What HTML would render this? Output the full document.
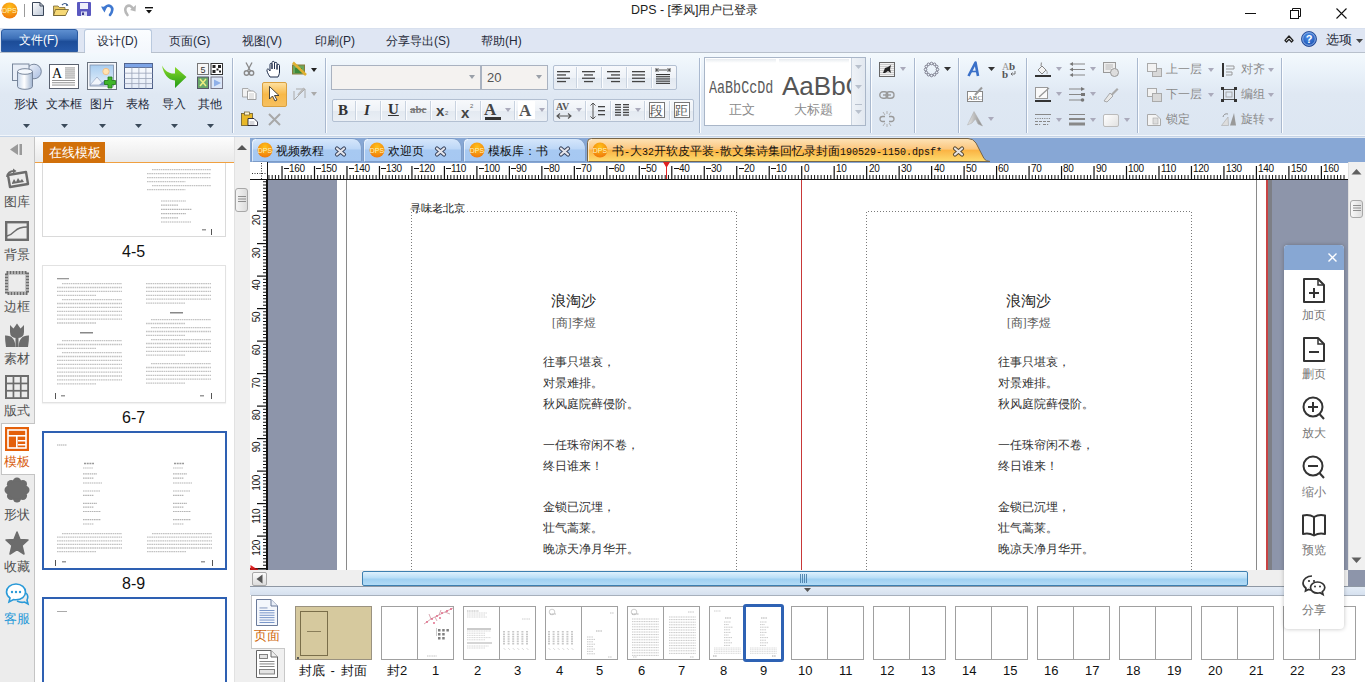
<!DOCTYPE html><html><head><meta charset="utf-8"><style>
*{margin:0;padding:0;box-sizing:border-box}
html,body{width:1365px;height:682px;overflow:hidden;background:#fff;font-family:"Liberation Sans",sans-serif;font-size:12px;color:#222}
.a{position:absolute}
.t{position:absolute;white-space:nowrap;line-height:1}
svg{overflow:visible}
</style></head><body>
<div class="a" style="left:0px;top:0px;width:1365px;height:28px;background:#fff"></div>
<svg class="a" style="left:1px;top:2px;" width="17" height="17" viewBox="0 0 17 17"><defs><radialGradient id="dpsg" cx="50%" cy="30%" r="70%"><stop offset="0" stop-color="#ffc21a"/><stop offset="1" stop-color="#f07a0a"/></radialGradient></defs><circle cx="8.5" cy="8.5" r="8" fill="url(#dpsg)"/><text x="8.5" y="11.3" font-size="7.2" fill="#fff3c0" text-anchor="middle" font-family="Liberation Sans">DPS</text></svg>
<div class="a" style="left:24px;top:4px;width:1px;height:13px;background:#9a9a9a"></div>
<svg class="a" style="left:32px;top:2px;" width="12" height="14" viewBox="0 0 12 14"><defs><linearGradient id="ndg" x1="0" y1="0" x2="1" y2="1"><stop offset="0" stop-color="#fff"/><stop offset="1" stop-color="#b9c4d4"/></linearGradient></defs><path d="M0.5 0.5H8L11.5 4V13.5H0.5Z" fill="url(#ndg)" stroke="#3a4658"/><path d="M8 0.5V4H11.5" fill="none" stroke="#3a4658"/></svg>
<svg class="a" style="left:53px;top:2px;" width="16" height="14" viewBox="0 0 16 14"><path d="M0.5 4H5L6.5 5.5H12V13.5H0.5Z" fill="#e8c860" stroke="#7a6a3a" stroke-width="0.8"/><path d="M2.5 7.5H15.5L12.5 13.5H0.5Z" fill="#f6d874" stroke="#6a5a2a" stroke-width="0.8"/><path d="M9 3 Q12 0 14.5 3" fill="none" stroke="#3a5a8a" stroke-width="1.2"/><path d="M13.5 1.5L15.5 3.5L13 4Z" fill="#3a5a8a"/></svg>
<svg class="a" style="left:77px;top:2px;" width="14" height="14" viewBox="0 0 14 14"><rect x="0" y="0" width="14" height="14" rx="1" fill="#5a58c0"/><rect x="3" y="1" width="8" height="6" fill="#eef0fa"/><rect x="4" y="9.5" width="6" height="4.5" fill="#d8dcf0"/><rect x="5" y="10.5" width="2" height="2.5" fill="#3a3890"/></svg>
<svg class="a" style="left:101px;top:3px;" width="13" height="13" viewBox="0 0 13 13"><path d="M3 6 Q6 1 10 3.5 Q13 6.5 9 12" fill="none" stroke="#3f78d0" stroke-width="2.6" stroke-linecap="round"/><path d="M0 3.5L6 4L3.5 9.5Z" fill="#3f78d0"/></svg>
<svg class="a" style="left:124px;top:3px;" width="12" height="13" viewBox="0 0 12 13"><path d="M9 5.5 Q6 1 2.5 3.5 Q-0.5 7 3.5 12" fill="none" stroke="#b8b8b8" stroke-width="2.6" stroke-linecap="round"/><path d="M12 2L11.5 8.5L6 7Z" fill="#b8b8b8"/></svg>
<svg class="a" style="left:145px;top:7px;" width="8" height="7" viewBox="0 0 8 7"><rect x="0" y="0" width="8" height="1.4" fill="#111"/><path d="M1 3H7L4 6.5Z" fill="#111"/></svg>
<div class="t" style="left:631px;top:4px;font-size:12.4px;color:#1e1e1e;">DPS - [季风]用户已登录</div>
<div class="a" style="left:1245px;top:13px;width:11px;height:1px;background:#111"></div>
<svg class="a" style="left:1290px;top:8px;" width="11" height="11" viewBox="0 0 11 11"><rect x="0.5" y="2.5" width="8" height="8" fill="none" stroke="#111"/><path d="M2.5 2.5V0.5H10.5V8.5H8.5" fill="none" stroke="#111"/></svg>
<svg class="a" style="left:1336px;top:8px;" width="11" height="11" viewBox="0 0 11 11"><path d="M0.5 0.5L10.5 10.5M10.5 0.5L0.5 10.5" stroke="#111" stroke-width="1.1"/></svg>
<div class="a" style="left:0px;top:28px;width:1365px;height:24px;background:#dfe6f3;border-top:1px solid #d8e0ee"></div>
<div class="a" style="left:1px;top:29px;width:77px;height:23px;background:linear-gradient(#5e8fd0 0%,#3d70b8 40%,#1c4c98 55%,#2558a8 100%);border:1px solid #2a5aa0;border-radius:3px 3px 0 0"></div>
<div class="t" style="left:19px;top:34px;font-size:12px;color:#fff;">文件(F)</div>
<div class="a" style="left:84px;top:29px;width:68px;height:24px;background:linear-gradient(#fbfdff,#f3f7fc);border:1px solid #b9c9de;border-bottom:none;border-radius:3px 3px 0 0"></div>
<div class="t" style="left:97px;top:35px;font-size:12px;color:#1f2a3a;">设计(D)</div>
<div class="t" style="left:169px;top:35px;font-size:12px;color:#1f2a3a;">页面(G)</div>
<div class="t" style="left:242px;top:35px;font-size:12px;color:#1f2a3a;">视图(V)</div>
<div class="t" style="left:315px;top:35px;font-size:12px;color:#1f2a3a;">印刷(P)</div>
<div class="t" style="left:386px;top:35px;font-size:12px;color:#1f2a3a;">分享导出(S)</div>
<div class="t" style="left:481px;top:35px;font-size:12px;color:#1f2a3a;">帮助(H)</div>
<svg class="a" style="left:1284px;top:34px;" width="10" height="9" viewBox="0 0 10 9"><path d="M1 6.5L5 2L9 6.5L7.5 8L5 5.3L2.5 8Z" fill="#fff" stroke="#222" stroke-width="1.3" stroke-linejoin="round"/></svg>
<svg class="a" style="left:1301px;top:31px;" width="16" height="16" viewBox="0 0 16 16"><defs><radialGradient id="hg" cx="45%" cy="35%" r="65%"><stop offset="0" stop-color="#4b8ee8"/><stop offset="1" stop-color="#1a4fb0"/></radialGradient></defs><circle cx="8" cy="8" r="7.5" fill="url(#hg)" stroke="#1a3f8a" stroke-width="0.8"/><circle cx="8" cy="8" r="6.3" fill="none" stroke="#cfe0fa" stroke-width="0.6"/><text x="8" y="12.2" font-size="11" font-weight="bold" fill="#fff" text-anchor="middle" font-family="Liberation Sans">?</text></svg>
<div class="t" style="left:1326px;top:34px;font-size:12.5px;color:#1f2a3a;">选项</div>
<svg class="a" style="left:1356px;top:39px;" width="7" height="4" viewBox="0 0 7 4"><path d="M0 0H7L3.5 4Z" fill="#444"/></svg>
<div class="a" style="left:0px;top:52px;width:1365px;height:85px;background:linear-gradient(#f3f9fd 0%,#e9f1f9 25%,#dfe8f3 50%,#dce6f2 100%);border-top:1px solid #b8c0cc;border-bottom:1px solid #c4d3e6"></div>
<div class="a" style="left:0px;top:135px;width:1365px;height:1px;background:#f2f6fb"></div>
<div class="a" style="left:85px;top:50px;width:66px;height:3px;background:#f5f8fd"></div>
<div class="a" style="left:232px;top:58px;width:1px;height:75px;background:#aab9cf"></div>
<div class="a" style="left:233px;top:58px;width:1px;height:75px;background:#fbfdff"></div>
<div class="a" style="left:325px;top:58px;width:1px;height:75px;background:#aab9cf"></div>
<div class="a" style="left:326px;top:58px;width:1px;height:75px;background:#fbfdff"></div>
<div class="a" style="left:699px;top:58px;width:1px;height:75px;background:#aab9cf"></div>
<div class="a" style="left:700px;top:58px;width:1px;height:75px;background:#fbfdff"></div>
<div class="a" style="left:870px;top:58px;width:1px;height:75px;background:#aab9cf"></div>
<div class="a" style="left:871px;top:58px;width:1px;height:75px;background:#fbfdff"></div>
<div class="a" style="left:914px;top:58px;width:1px;height:75px;background:#aab9cf"></div>
<div class="a" style="left:915px;top:58px;width:1px;height:75px;background:#fbfdff"></div>
<div class="a" style="left:958px;top:58px;width:1px;height:75px;background:#aab9cf"></div>
<div class="a" style="left:959px;top:58px;width:1px;height:75px;background:#fbfdff"></div>
<div class="a" style="left:1026px;top:58px;width:1px;height:75px;background:#aab9cf"></div>
<div class="a" style="left:1027px;top:58px;width:1px;height:75px;background:#fbfdff"></div>
<div class="a" style="left:1137px;top:58px;width:1px;height:75px;background:#aab9cf"></div>
<div class="a" style="left:1138px;top:58px;width:1px;height:75px;background:#fbfdff"></div>
<div class="a" style="left:1281px;top:58px;width:1px;height:75px;background:#aab9cf"></div>
<div class="a" style="left:1282px;top:58px;width:1px;height:75px;background:#fbfdff"></div>
<svg class="a" style="left:12px;top:62px;" width="30" height="28" viewBox="0 0 30 28"><defs><linearGradient id="cyl" x1="0" x2="1"><stop offset="0" stop-color="#c6d6ea"/><stop offset="0.45" stop-color="#ffffff"/><stop offset="1" stop-color="#9fb3cf"/></linearGradient><linearGradient id="cir" x1="0" y1="0" x2="1" y2="1"><stop offset="0" stop-color="#f2f6fc"/><stop offset="1" stop-color="#a9bde0"/></linearGradient></defs><circle cx="22" cy="9.5" r="7.3" fill="url(#cir)" stroke="#6d7c92" stroke-width="0.9"/><rect x="0.5" y="2" width="16.5" height="16.5" fill="#e8eef7" stroke="#6d7c92" stroke-width="0.9"/><path d="M5.5 9.5V24.5A7.5 2.8 0 0 0 20.5 24.5V9.5" fill="url(#cyl)" stroke="#6d7c92" stroke-width="0.9"/><ellipse cx="13" cy="9.5" rx="7.5" ry="2.8" fill="#f4f8fd" stroke="#6d7c92" stroke-width="0.9"/></svg>
<svg class="a" style="left:49px;top:64px;" width="30" height="25" viewBox="0 0 30 25"><rect x="0.5" y="0.5" width="29" height="24" fill="#fff" stroke="#5a6270"/><text x="3" y="14" font-size="14" font-family="Liberation Serif" fill="#111">A</text><rect x="16" y="3.5" width="10" height="0.9" fill="#888"/><rect x="16" y="5.5" width="10" height="0.9" fill="#888"/><rect x="16" y="7.5" width="10" height="0.9" fill="#888"/><rect x="16" y="9.5" width="10" height="0.9" fill="#888"/><rect x="16" y="11.5" width="10" height="0.9" fill="#888"/><rect x="16" y="13.5" width="10" height="0.9" fill="#888"/><rect x="3" y="16.0" width="23" height="0.9" fill="#888"/><rect x="3" y="18.3" width="23" height="0.9" fill="#888"/><rect x="3" y="20.6" width="23" height="0.9" fill="#888"/></svg>
<svg class="a" style="left:87px;top:62px;" width="30" height="28" viewBox="0 0 30 28"><defs><linearGradient id="sky" x1="0" y1="0" x2="0" y2="1"><stop offset="0" stop-color="#a8cdf0"/><stop offset="1" stop-color="#e6f0fa"/></linearGradient></defs><rect x="0.5" y="0.5" width="29" height="27" fill="#f4f7fb" stroke="#6b7480"/><rect x="3" y="3" width="23.5" height="21" fill="url(#sky)" stroke="#7f8fa8" stroke-width="0.8"/><circle cx="19" cy="9.5" r="3.2" fill="#ffe3b0" stroke="#f0b880" stroke-width="0.8"/><path d="M3 23L10 15L17 23Z" fill="#f0f4fa" stroke="#8898b8" stroke-width="0.6"/><path d="M12 23L18 18L24 23Z" fill="#7f95c8"/><path d="M21 15h4v3.5h3.5v4h-3.5v3.5h-4v-3.5h-3.5v-4h3.5Z" fill="#3fb52a" stroke="#1e7a14" stroke-width="0.8"/></svg>
<svg class="a" style="left:124px;top:63px;" width="29" height="26" viewBox="0 0 29 26"><defs><linearGradient id="tb" x1="0" y1="0" x2="0" y2="1"><stop offset="0" stop-color="#fbfdff"/><stop offset="1" stop-color="#e4ebf7"/></linearGradient></defs><rect x="0.5" y="0.5" width="28" height="25" fill="url(#tb)" stroke="#4f6088"/><rect x="0.5" y="0.5" width="28" height="4" fill="#7da4e6" stroke="#4f6088" stroke-width="0.8"/><rect x="7.5" y="4.5" width="0.8" height="21" fill="#9aa4b8"/><rect x="14.5" y="4.5" width="0.8" height="21" fill="#9aa4b8"/><rect x="21.5" y="4.5" width="0.8" height="21" fill="#9aa4b8"/><rect x="0.5" y="9.75" width="28" height="0.8" fill="#9aa4b8"/><rect x="0.5" y="15.0" width="28" height="0.8" fill="#9aa4b8"/><rect x="0.5" y="20.25" width="28" height="0.8" fill="#9aa4b8"/></svg>
<svg class="a" style="left:162px;top:65px;" width="25" height="23" viewBox="0 0 25 23"><defs><linearGradient id="ar" x1="0" y1="0" x2="0" y2="1"><stop offset="0" stop-color="#8fdc2a"/><stop offset="1" stop-color="#1f9a16"/></linearGradient></defs><path d="M0 0.5C3 6 7 9 13 8.5V2L24.5 12L13 23V15.5C6 15 1.5 9 0 0.5Z" fill="url(#ar)"/></svg>
<svg class="a" style="left:197px;top:63px;" width="26" height="26" viewBox="0 0 26 26"><rect x="0.5" y="0.5" width="11" height="11" fill="#f6f6f6" stroke="#777"/><text x="6" y="9.5" font-size="9" font-family="Liberation Sans" fill="#333" text-anchor="middle">5</text><rect x="14" y="0.5" width="11.5" height="11" fill="#fff" stroke="#333"/><path d="M15.5 2h3v3h-3zM21 2h3v3h-3zM15.5 7h3v3h-3zM19.5 5.5h2v2h-2zM22 7.5h2v2h-2z" fill="#222"/><rect x="0.5" y="14" width="11" height="11.5" fill="#6aa86a" stroke="#556"/><path d="M3 16l6 7M9 16l-6 7" stroke="#f0f080" stroke-width="1.5"/><rect x="14" y="14" width="11.5" height="11.5" fill="#dbe6f7" stroke="#778"/><path d="M17 16.5L24 20L17 23.5Z" fill="#8fb0e8"/></svg>
<div class="t" style="left:14px;top:98px;font-size:12px;color:#1f2a3a;">形状</div>
<svg class="a" style="left:23px;top:124px;" width="7" height="4" viewBox="0 0 7 4"><path d="M0 0H7L3.5 4Z" fill="#3a4a5a"/></svg>
<div class="t" style="left:46px;top:98px;font-size:12px;color:#1f2a3a;">文本框</div>
<svg class="a" style="left:61px;top:124px;" width="7" height="4" viewBox="0 0 7 4"><path d="M0 0H7L3.5 4Z" fill="#3a4a5a"/></svg>
<div class="t" style="left:90px;top:98px;font-size:12px;color:#1f2a3a;">图片</div>
<svg class="a" style="left:99px;top:124px;" width="7" height="4" viewBox="0 0 7 4"><path d="M0 0H7L3.5 4Z" fill="#3a4a5a"/></svg>
<div class="t" style="left:126px;top:98px;font-size:12px;color:#1f2a3a;">表格</div>
<svg class="a" style="left:135px;top:124px;" width="7" height="4" viewBox="0 0 7 4"><path d="M0 0H7L3.5 4Z" fill="#3a4a5a"/></svg>
<div class="t" style="left:162px;top:98px;font-size:12px;color:#1f2a3a;">导入</div>
<svg class="a" style="left:171px;top:124px;" width="7" height="4" viewBox="0 0 7 4"><path d="M0 0H7L3.5 4Z" fill="#3a4a5a"/></svg>
<div class="t" style="left:198px;top:98px;font-size:12px;color:#1f2a3a;">其他</div>
<svg class="a" style="left:207px;top:124px;" width="7" height="4" viewBox="0 0 7 4"><path d="M0 0H7L3.5 4Z" fill="#3a4a5a"/></svg>
<svg class="a" style="left:244px;top:62px;" width="10" height="14" viewBox="0 0 10 14"><circle cx="2.5" cy="11" r="2.2" fill="none" stroke="#8a8a8a" stroke-width="1.4"/><circle cx="7.5" cy="11" r="2.2" fill="none" stroke="#8a8a8a" stroke-width="1.4"/><path d="M3.5 9L8 0.5M6.5 9L2 0.5" stroke="#8a8a8a" stroke-width="1.3"/></svg>
<svg class="a" style="left:266px;top:61px;" width="17" height="17" viewBox="0 0 17 17"><path d="M4 16C2 13 0.5 10 1 8.5C1.5 7.5 3 8 4 10V3.5C4 2 6 2 6 3.5V8V1.5C6 0 8.5 0 8.5 1.5V8V2.5C8.5 1 11 1 11 2.5V8.5V4.5C11 3 13.5 3 13.5 4.5V11C13.5 13 12.5 15 12 16Z" fill="#fff" stroke="#1e2d4a" stroke-width="1"/></svg>
<svg class="a" style="left:292px;top:62px;" width="15" height="14" viewBox="0 0 15 14"><rect x="0.5" y="3" width="12" height="9" fill="#6aa65a" stroke="#8a7a3a"/><rect x="3" y="6" width="7" height="5" fill="#3d8a3a"/><path d="M1 0.5L14 13" stroke="#e0b030" stroke-width="2.5"/></svg>
<svg class="a" style="left:311px;top:68px;" width="6" height="4" viewBox="0 0 6 4"><path d="M0 0H6L3.0 4Z" fill="#222"/></svg>
<div class="a" style="left:262px;top:82px;width:25px;height:25px;background:linear-gradient(#fde0a0,#f8b848 50%,#f6c060);border:1px solid #d9a040;border-radius:2px"></div>
<svg class="a" style="left:269px;top:86px;" width="11" height="16" viewBox="0 0 11 16"><path d="M0.5 0.5V13L3.5 10L6 15L8 14L5.5 9.5H10Z" fill="#fff" stroke="#333" stroke-width="0.9"/></svg>
<svg class="a" style="left:242px;top:88px;" width="15" height="12" viewBox="0 0 15 12"><path d="M0.5 0.5H6L8 2.5V9H0.5Z" fill="#f2f2f2" stroke="#999" stroke-width="0.8"/><path d="M5.5 3H11.5L14 5.5V11.5H5.5Z" fill="#fff" stroke="#8a8a8a" stroke-width="0.8"/><path d="M7 6h5M7 8h5M7 10h5" stroke="#aaa" stroke-width="0.6"/></svg>
<svg class="a" style="left:292px;top:86px;" width="15" height="15" viewBox="0 0 15 15"><path d="M2 14L13 3M4 3L13 3L13 12M2 14L2 5" fill="none" stroke="#aaa" stroke-width="1"/><path d="M6 9L12 2" stroke="#bbb" stroke-width="1.8"/></svg>
<svg class="a" style="left:311px;top:92px;" width="6" height="4" viewBox="0 0 6 4"><path d="M0 0H6L3.0 4Z" fill="#aaa"/></svg>
<svg class="a" style="left:241px;top:112px;" width="17" height="14" viewBox="0 0 17 14"><rect x="0.5" y="1.5" width="11" height="12" fill="#e8b828" stroke="#6a5a2a" stroke-width="0.8"/><rect x="3.5" y="0" width="5" height="3" fill="#fff5d0" stroke="#6a5a2a" stroke-width="0.7"/><path d="M7 6.5H13L16.5 10V13.5H7Z" fill="#fff" stroke="#223" stroke-width="0.9"/><path d="M8.5 10h5M8.5 12h5" stroke="#778" stroke-width="0.6"/></svg>
<svg class="a" style="left:268px;top:113px;" width="13" height="13" viewBox="0 0 13 13"><path d="M1 1L12 12M12 1L1 12" stroke="#a8a8a8" stroke-width="2"/></svg>
<div class="a" style="left:331px;top:65px;width:150px;height:25px;background:#f4f2f0;border:1px solid #a9b2c0"></div>
<div class="a" style="left:481px;top:65px;width:67px;height:25px;background:#f4f2f0;border:1px solid #a9b2c0"></div>
<svg class="a" style="left:469px;top:75px;" width="6" height="4" viewBox="0 0 6 4"><path d="M0 0H6L3.0 4Z" fill="#9aa0a8"/></svg>
<svg class="a" style="left:536px;top:75px;" width="6" height="4" viewBox="0 0 6 4"><path d="M0 0H6L3.0 4Z" fill="#9aa0a8"/></svg>
<div class="t" style="left:487px;top:71px;font-size:13px;color:#555;">20</div>
<div class="a" style="left:553px;top:65px;width:124px;height:25px;background:linear-gradient(#f7f9fc 0%,#eef2f7 50%,#e3e9f1 51%,#eaeff5 100%);border:1px solid #b3c0d2;border-radius:2px"></div>
<div class="a" style="left:576px;top:67px;width:1px;height:21px;background:#c9d3e0"></div>
<div class="a" style="left:577px;top:67px;width:1px;height:21px;background:#fcfdff"></div>
<div class="a" style="left:601px;top:67px;width:1px;height:21px;background:#c9d3e0"></div>
<div class="a" style="left:602px;top:67px;width:1px;height:21px;background:#fcfdff"></div>
<div class="a" style="left:626px;top:67px;width:1px;height:21px;background:#c9d3e0"></div>
<div class="a" style="left:627px;top:67px;width:1px;height:21px;background:#fcfdff"></div>
<div class="a" style="left:651px;top:67px;width:1px;height:21px;background:#c9d3e0"></div>
<div class="a" style="left:652px;top:67px;width:1px;height:21px;background:#fcfdff"></div>
<svg class="a" style="left:557px;top:71px;" width="16" height="16" viewBox="0 0 16 16"><rect x="0" y="0.0" width="13" height="1.3" fill="#444"/><rect x="0" y="3.3" width="9" height="1.3" fill="#444"/><rect x="0" y="6.6" width="13" height="1.3" fill="#444"/><rect x="0" y="9.899999999999999" width="9" height="1.3" fill="#444"/></svg>
<svg class="a" style="left:582px;top:71px;" width="16" height="16" viewBox="0 0 16 16"><rect x="0" y="0.0" width="13" height="1.3" fill="#444"/><rect x="2" y="3.3" width="9" height="1.3" fill="#444"/><rect x="0" y="6.6" width="13" height="1.3" fill="#444"/><rect x="2" y="9.899999999999999" width="9" height="1.3" fill="#444"/></svg>
<svg class="a" style="left:607px;top:71px;" width="16" height="16" viewBox="0 0 16 16"><rect x="0" y="0.0" width="13" height="1.3" fill="#444"/><rect x="4" y="3.3" width="9" height="1.3" fill="#444"/><rect x="0" y="6.6" width="13" height="1.3" fill="#444"/><rect x="4" y="9.899999999999999" width="9" height="1.3" fill="#444"/></svg>
<svg class="a" style="left:632px;top:71px;" width="16" height="16" viewBox="0 0 16 16"><rect x="0" y="0.0" width="13" height="1.3" fill="#444"/><rect x="0" y="3.3" width="13" height="1.3" fill="#444"/><rect x="0" y="6.6" width="13" height="1.3" fill="#444"/><rect x="0" y="9.899999999999999" width="13" height="1.3" fill="#444"/></svg>
<svg class="a" style="left:655px;top:68px;" width="16" height="18" viewBox="0 0 16 18"><path d="M1 2H15M1 0V4M15 0V4M3.5 0.5L1 2L3.5 3.5M12.5 0.5L15 2L12.5 3.5" fill="none" stroke="#444" stroke-width="0.9"/><rect x="1" y="6.0" width="14" height="1.1" fill="#333"/><rect x="1" y="8.2" width="14" height="1.1" fill="#333"/><rect x="1" y="10.4" width="14" height="1.1" fill="#333"/><rect x="1" y="12.600000000000001" width="14" height="1.1" fill="#333"/><rect x="1" y="14.8" width="14" height="1.1" fill="#333"/></svg>
<div class="a" style="left:332px;top:99px;width:216px;height:23px;background:linear-gradient(#f7f9fc 0%,#eef2f7 50%,#e3e9f1 51%,#eaeff5 100%);border:1px solid #b3c0d2;border-radius:2px"></div>
<div class="a" style="left:355px;top:101px;width:1px;height:19px;background:#c9d3e0"></div>
<div class="a" style="left:356px;top:101px;width:1px;height:19px;background:#fcfdff"></div>
<div class="a" style="left:380px;top:101px;width:1px;height:19px;background:#c9d3e0"></div>
<div class="a" style="left:381px;top:101px;width:1px;height:19px;background:#fcfdff"></div>
<div class="a" style="left:405px;top:101px;width:1px;height:19px;background:#c9d3e0"></div>
<div class="a" style="left:406px;top:101px;width:1px;height:19px;background:#fcfdff"></div>
<div class="a" style="left:430px;top:101px;width:1px;height:19px;background:#c9d3e0"></div>
<div class="a" style="left:431px;top:101px;width:1px;height:19px;background:#fcfdff"></div>
<div class="a" style="left:455px;top:101px;width:1px;height:19px;background:#c9d3e0"></div>
<div class="a" style="left:456px;top:101px;width:1px;height:19px;background:#fcfdff"></div>
<div class="a" style="left:480px;top:101px;width:1px;height:19px;background:#c9d3e0"></div>
<div class="a" style="left:481px;top:101px;width:1px;height:19px;background:#fcfdff"></div>
<div class="a" style="left:514px;top:101px;width:1px;height:19px;background:#c9d3e0"></div>
<div class="a" style="left:515px;top:101px;width:1px;height:19px;background:#fcfdff"></div>
<div class="t" style="left:338px;top:103px;font-size:15px;color:#333;font-family:'Liberation Serif',serif;font-weight:bold">B</div>
<div class="t" style="left:364px;top:103px;font-size:15px;color:#333;font-family:'Liberation Serif',serif;font-style:italic;font-weight:bold">I</div>
<div class="t" style="left:388px;top:102px;font-size:15px;color:#333;font-family:'Liberation Serif',serif;font-weight:bold;text-decoration:underline">U</div>
<div class="t" style="left:410px;top:104px;font-size:11px;color:#777;font-family:'Liberation Serif',serif;font-weight:bold;text-decoration:line-through">abc</div>
<div class="t" style="left:436px;top:103px;font-size:15px;color:#444;font-weight:bold">x</div>
<div class="t" style="left:445px;top:110px;font-size:6px;color:#666;">2</div>
<div class="t" style="left:461px;top:105px;font-size:15px;color:#444;font-weight:bold">x</div>
<div class="t" style="left:470px;top:103px;font-size:6px;color:#666;">2</div>
<div class="t" style="left:484px;top:101px;font-size:17px;color:#444;font-family:'Liberation Serif',serif;font-weight:bold">A</div>
<div class="a" style="left:485px;top:117px;width:16px;height:3px;background:#333"></div>
<svg class="a" style="left:505px;top:108px;" width="6" height="4" viewBox="0 0 6 4"><path d="M0 0H6L3.0 4Z" fill="#aab"/></svg>
<div class="a" style="left:518px;top:101px;width:17px;height:18px;background:#fff"></div>
<div class="t" style="left:519px;top:102px;font-size:17px;color:#555;font-family:'Liberation Serif',serif;font-weight:bold">A</div>
<svg class="a" style="left:539px;top:108px;" width="6" height="4" viewBox="0 0 6 4"><path d="M0 0H6L3.0 4Z" fill="#aab"/></svg>
<div class="a" style="left:553px;top:99px;width:141px;height:23px;background:linear-gradient(#f7f9fc 0%,#eef2f7 50%,#e3e9f1 51%,#eaeff5 100%);border:1px solid #b3c0d2;border-radius:2px"></div>
<div class="a" style="left:585px;top:101px;width:1px;height:19px;background:#c9d3e0"></div>
<div class="a" style="left:586px;top:101px;width:1px;height:19px;background:#fcfdff"></div>
<div class="a" style="left:610px;top:101px;width:1px;height:19px;background:#c9d3e0"></div>
<div class="a" style="left:611px;top:101px;width:1px;height:19px;background:#fcfdff"></div>
<div class="a" style="left:644px;top:101px;width:1px;height:19px;background:#c9d3e0"></div>
<div class="a" style="left:645px;top:101px;width:1px;height:19px;background:#fcfdff"></div>
<div class="a" style="left:669px;top:101px;width:1px;height:19px;background:#c9d3e0"></div>
<div class="a" style="left:670px;top:101px;width:1px;height:19px;background:#fcfdff"></div>
<div class="t" style="left:556px;top:102px;font-size:10px;color:#555;font-family:'Liberation Serif',serif;font-weight:bold">AV</div>
<svg class="a" style="left:556px;top:113px;" width="16" height="6" viewBox="0 0 16 6"><path d="M1 3H15M4 0.5L1 3L4 5.5M12 0.5L15 3L12 5.5" fill="none" stroke="#555" stroke-width="1.1"/></svg>
<svg class="a" style="left:576px;top:108px;" width="6" height="4" viewBox="0 0 6 4"><path d="M0 0H6L3.0 4Z" fill="#aab"/></svg>
<svg class="a" style="left:590px;top:102px;" width="16" height="18" viewBox="0 0 16 18"><path d="M3 1V17M0.5 3.5L3 1L5.5 3.5M0.5 14.5L3 17L5.5 14.5" fill="none" stroke="#555" stroke-width="1"/><rect x="8" y="4" width="7" height="1.3" fill="#444"/><rect x="8" y="8" width="7" height="1.3" fill="#444"/><rect x="8" y="12" width="7" height="1.3" fill="#444"/></svg>
<svg class="a" style="left:615px;top:104px;" width="14" height="13" viewBox="0 0 14 13"><rect x="0" y="0.0" width="6" height="1.3" fill="#444"/><rect x="8" y="0.0" width="6" height="1.3" fill="#444"/><rect x="0" y="2.6" width="6" height="1.3" fill="#444"/><rect x="8" y="2.6" width="6" height="1.3" fill="#444"/><rect x="0" y="5.2" width="6" height="1.3" fill="#444"/><rect x="8" y="5.2" width="6" height="1.3" fill="#444"/><rect x="0" y="7.800000000000001" width="6" height="1.3" fill="#444"/><rect x="8" y="7.800000000000001" width="6" height="1.3" fill="#444"/><rect x="0" y="10.4" width="6" height="1.3" fill="#444"/><rect x="8" y="10.4" width="6" height="1.3" fill="#444"/></svg>
<svg class="a" style="left:635px;top:108px;" width="6" height="4" viewBox="0 0 6 4"><path d="M0 0H6L3.0 4Z" fill="#aab"/></svg>
<div class="a" style="left:649px;top:102px;width:16px;height:16px;background:#fff;border:1px solid #777"></div>
<div class="t" style="left:650px;top:104px;font-size:13px;color:#555;">段</div>
<div class="a" style="left:674px;top:102px;width:16px;height:16px;background:#fff;border:1px solid #777"></div>
<div class="t" style="left:675px;top:104px;font-size:13px;color:#555;">距</div>
<div class="a" style="left:704px;top:57px;width:162px;height:69px;background:#fff;border:1px solid #a9b6c8"></div>
<div class="a" style="left:851px;top:58px;width:14px;height:67px;background:linear-gradient(90deg,#eef2f7,#e2e8f0);border-left:1px solid #c8d2de"></div>
<svg class="a" style="left:855px;top:65px;" width="7" height="4" viewBox="0 0 7 4"><path d="M0 0H7L3.5 4Z" fill="#b8c0cc"/></svg>
<svg class="a" style="left:855px;top:85px;" width="7" height="4" viewBox="0 0 7 4"><path d="M0 0H7L3.5 4Z" fill="#b8c0cc"/></svg>
<div class="a" style="left:855px;top:104px;width:7px;height:1px;background:#b8c0cc"></div>
<svg class="a" style="left:855px;top:110px;" width="7" height="4" viewBox="0 0 7 4"><path d="M0 0H7L3.5 4Z" fill="#b8c0cc"/></svg>
<div class="a" style="left:706px;top:59px;width:70px;height:4px;background:linear-gradient(#e8ecf0,#fff)"></div>
<div class="a" style="left:779px;top:59px;width:70px;height:4px;background:linear-gradient(#e8ecf0,#fff)"></div>
<div class="t" style="left:709px;top:79px;font-size:13.4px;color:#5a5a5a;font-family:'Liberation Mono',monospace;transform:scaleY(1.38);transform-origin:0 0">AaBbCcDd</div>
<div class="a" style="left:779px;top:70px;width:72px;height:30px;overflow:hidden"><div class="t" style="left:3px;top:3px;font-size:26px;color:#555">AaBbC</div></div>
<div class="t" style="left:729px;top:103px;font-size:13px;color:#8a8a8a;">正文</div>
<div class="t" style="left:794px;top:103px;font-size:13px;color:#8a8a8a;">大标题</div>
<svg class="a" style="left:879px;top:62px;" width="16" height="15" viewBox="0 0 16 15"><rect x="0.5" y="0.5" width="15" height="14" fill="#f2f2f2" stroke="#666"/><rect x="1" y="2" width="14" height="0.7" fill="#bbb"/><rect x="1" y="4" width="14" height="0.7" fill="#bbb"/><rect x="1" y="6" width="14" height="0.7" fill="#bbb"/><rect x="1" y="8" width="14" height="0.7" fill="#bbb"/><rect x="1" y="10" width="14" height="0.7" fill="#bbb"/><rect x="1" y="12" width="14" height="0.7" fill="#bbb"/><path d="M4 11L6 6L9 5L12 3L11 7L12 11L9 9L6 11Z" fill="#222"/></svg>
<svg class="a" style="left:900px;top:67px;" width="6" height="4" viewBox="0 0 6 4"><path d="M0 0H6L3.0 4Z" fill="#aab"/></svg>
<svg class="a" style="left:879px;top:91px;" width="16" height="8" viewBox="0 0 16 8"><rect x="0.8" y="0.8" width="8" height="6.4" rx="3.2" fill="none" stroke="#999" stroke-width="1.4"/><rect x="7" y="0.8" width="8" height="6.4" rx="3.2" fill="none" stroke="#999" stroke-width="1.4"/><path d="M4 4H12" stroke="#999" stroke-width="1.4"/></svg>
<svg class="a" style="left:879px;top:111px;" width="16" height="16" viewBox="0 0 16 16"><path d="M4 1L6 4M12 1L10 4M4 15L6 12M12 15L10 12M8 0V3M8 13V16" stroke="#aaa" stroke-width="0.9"/><path d="M6 5.5H3.5A2.5 2.5 0 0 0 3.5 10.5H6M10 5.5H12.5A2.5 2.5 0 0 1 12.5 10.5H10" fill="none" stroke="#999" stroke-width="1.3"/></svg>
<svg class="a" style="left:924px;top:62px;" width="15" height="15" viewBox="0 0 15 15"><circle cx="13.50" cy="7.50" r="1.3" fill="none" stroke="#667" stroke-width="0.8"/><circle cx="12.70" cy="10.50" r="1.3" fill="none" stroke="#667" stroke-width="0.8"/><circle cx="10.50" cy="12.70" r="1.3" fill="none" stroke="#667" stroke-width="0.8"/><circle cx="7.50" cy="13.50" r="1.3" fill="none" stroke="#667" stroke-width="0.8"/><circle cx="4.50" cy="12.70" r="1.3" fill="none" stroke="#667" stroke-width="0.8"/><circle cx="2.30" cy="10.50" r="1.3" fill="none" stroke="#667" stroke-width="0.8"/><circle cx="1.50" cy="7.50" r="1.3" fill="none" stroke="#667" stroke-width="0.8"/><circle cx="2.30" cy="4.50" r="1.3" fill="none" stroke="#667" stroke-width="0.8"/><circle cx="4.50" cy="2.30" r="1.3" fill="none" stroke="#667" stroke-width="0.8"/><circle cx="7.50" cy="1.50" r="1.3" fill="none" stroke="#667" stroke-width="0.8"/><circle cx="10.50" cy="2.30" r="1.3" fill="none" stroke="#667" stroke-width="0.8"/><circle cx="12.70" cy="4.50" r="1.3" fill="none" stroke="#667" stroke-width="0.8"/></svg>
<svg class="a" style="left:944px;top:67px;" width="7" height="4" viewBox="0 0 7 4"><path d="M0 0H7L3.5 4Z" fill="#333"/></svg>
<svg class="a" style="left:968px;top:62px;" width="14" height="15" viewBox="0 0 14 15"><path d="M0.5 14L7.5 0.5L10 14" fill="none" stroke="#3a70c8" stroke-width="2.6" stroke-linejoin="round"/><path d="M3 9.5H9" stroke="#3a70c8" stroke-width="1.6"/></svg>
<svg class="a" style="left:988px;top:67px;" width="7" height="4" viewBox="0 0 7 4"><path d="M0 0H7L3.5 4Z" fill="#333"/></svg>
<div class="t" style="left:1002px;top:62px;font-size:10px;color:#999;font-family:'Liberation Serif',serif">A</div>
<div class="t" style="left:1009px;top:61px;font-size:11px;color:#555;font-family:'Liberation Serif',serif;font-weight:bold">b</div>
<div class="t" style="left:1002px;top:69px;font-size:11px;color:#555;font-family:'Liberation Serif',serif;font-weight:bold">b</div>
<svg class="a" style="left:1010px;top:71px;" width="7" height="6" viewBox="0 0 7 6"><path d="M5 0V3H1M2.5 1.5L1 3L2.5 4.5" fill="none" stroke="#666" stroke-width="0.9"/></svg>
<svg class="a" style="left:967px;top:86px;" width="17" height="16" viewBox="0 0 17 16"><rect x="0.5" y="5.5" width="15" height="10" fill="#fff" stroke="#888"/><text x="8" y="13.5" font-size="7" text-anchor="middle" fill="#666" font-family="Liberation Serif">ABC</text><path d="M8 9L15 1.5" stroke="#999" stroke-width="2"/></svg>
<svg class="a" style="left:967px;top:111px;" width="16" height="16" viewBox="0 0 16 16"><defs><linearGradient id="a3" x1="0" x2="1"><stop offset="0" stop-color="#e8e8e8"/><stop offset="1" stop-color="#888"/></linearGradient></defs><path d="M0.5 14L7 0.5L15.5 15L11 13L8.5 8L5 12Z" fill="url(#a3)" stroke="#aaa" stroke-width="0.5"/></svg>
<svg class="a" style="left:988px;top:117px;" width="6" height="4" viewBox="0 0 6 4"><path d="M0 0H6L3.0 4Z" fill="#aab"/></svg>
<svg class="a" style="left:1035px;top:62px;" width="16" height="15" viewBox="0 0 16 15"><path d="M3 8L7 4L11 8L7 12Z" fill="#f4f4f4" stroke="#888"/><path d="M6 4L6.5 0.5" stroke="#999" stroke-width="1.2"/><path d="M11 8Q13 10 12 12" fill="none" stroke="#aaa"/><rect x="0" y="13" width="16" height="2" fill="#333"/></svg>
<svg class="a" style="left:1035px;top:87px;" width="16" height="15" viewBox="0 0 16 15"><rect x="0.5" y="0.5" width="12" height="11" fill="#fafafa" stroke="#999"/><path d="M4 10L14 1" stroke="#999" stroke-width="1.3"/><rect x="0" y="13" width="16" height="2" fill="#333"/></svg>
<svg class="a" style="left:1035px;top:114px;" width="16" height="12" viewBox="0 0 16 12"><rect x="0" y="0" width="16" height="1" fill="#888"/><rect x="0.0" y="4" width="1.2" height="1" fill="#888"/><rect x="2.3" y="4" width="1.2" height="1" fill="#888"/><rect x="4.6" y="4" width="1.2" height="1" fill="#888"/><rect x="6.8999999999999995" y="4" width="1.2" height="1" fill="#888"/><rect x="9.2" y="4" width="1.2" height="1" fill="#888"/><rect x="11.5" y="4" width="1.2" height="1" fill="#888"/><rect x="13.799999999999999" y="4" width="1.2" height="1" fill="#888"/><rect x="0" y="7" width="3" height="1" fill="#888"/><rect x="4" y="7" width="3" height="1" fill="#888"/><rect x="8" y="7" width="3" height="1" fill="#888"/><rect x="12" y="7" width="3" height="1" fill="#888"/><rect x="0" y="10" width="3" height="1" fill="#888"/><rect x="4" y="10" width="1.2" height="1" fill="#888"/><rect x="8" y="10" width="3" height="1" fill="#888"/><rect x="12" y="10" width="1.2" height="1" fill="#888"/></svg>
<svg class="a" style="left:1069px;top:62px;" width="16" height="15" viewBox="0 0 16 15"><path d="M16 2H3M16 7.5H3M16 13H3" stroke="#888" stroke-width="1.1"/><path d="M0.5 2L4 0V4ZM0.5 7.5L4 5.5V9.5ZM0.5 13L4 11V15Z" fill="#777"/></svg>
<svg class="a" style="left:1069px;top:87px;" width="16" height="15" viewBox="0 0 16 15"><path d="M0 2H13M0 7.5H12M0 13H13" stroke="#888" stroke-width="1.1"/><path d="M16 2L12 0V4Z" fill="#777"/><rect x="12" y="6" width="4" height="3" fill="#777"/><circle cx="13.5" cy="13" r="1.8" fill="#777"/></svg>
<svg class="a" style="left:1069px;top:114px;" width="16" height="12" viewBox="0 0 16 12"><rect x="0" y="0" width="16" height="1" fill="#888"/><rect x="0" y="4" width="16" height="2" fill="#888"/><rect x="0" y="8.5" width="16" height="3" fill="#888"/></svg>
<svg class="a" style="left:1056px;top:67px;" width="6" height="4" viewBox="0 0 6 4"><path d="M0 0H6L3.0 4Z" fill="#aab"/></svg>
<svg class="a" style="left:1056px;top:92px;" width="6" height="4" viewBox="0 0 6 4"><path d="M0 0H6L3.0 4Z" fill="#aab"/></svg>
<svg class="a" style="left:1056px;top:118px;" width="6" height="4" viewBox="0 0 6 4"><path d="M0 0H6L3.0 4Z" fill="#aab"/></svg>
<svg class="a" style="left:1090px;top:67px;" width="6" height="4" viewBox="0 0 6 4"><path d="M0 0H6L3.0 4Z" fill="#aab"/></svg>
<svg class="a" style="left:1090px;top:92px;" width="6" height="4" viewBox="0 0 6 4"><path d="M0 0H6L3.0 4Z" fill="#aab"/></svg>
<svg class="a" style="left:1090px;top:118px;" width="6" height="4" viewBox="0 0 6 4"><path d="M0 0H6L3.0 4Z" fill="#aab"/></svg>
<svg class="a" style="left:1103px;top:62px;" width="16" height="15" viewBox="0 0 16 15"><rect x="0.5" y="0.5" width="12" height="10" fill="#eee" stroke="#999"/><path d="M2.5 3H10M2.5 5H10M2.5 7H8" stroke="#aaa" stroke-width="0.8"/><circle cx="11.5" cy="10.5" r="4" fill="#ddd" stroke="#999"/></svg>
<svg class="a" style="left:1103px;top:87px;" width="16" height="15" viewBox="0 0 16 15"><path d="M1 14L7 6L10 9L4 15Z" fill="#e8e8e8" stroke="#999" stroke-width="0.8"/><path d="M8 7L14 1L15.5 2.5L9.5 8.5Z" fill="#aaa"/></svg>
<div class="a" style="left:1103px;top:114px;width:16px;height:13px;background:linear-gradient(135deg,#fff,#e2e2e2);border:1px solid #bbb;border-radius:2px"></div>
<svg class="a" style="left:1124px;top:118px;" width="6" height="4" viewBox="0 0 6 4"><path d="M0 0H6L3.0 4Z" fill="#aab"/></svg>
<svg class="a" style="left:1147px;top:63px;" width="15" height="14" viewBox="0 0 15 14"><rect x="5.5" y="5.5" width="9" height="8" fill="#d8d8d8" stroke="#aaa"/><rect x="0.5" y="0.5" width="9" height="8" fill="#f2f2f2" stroke="#aaa"/></svg>
<svg class="a" style="left:1147px;top:88px;" width="15" height="14" viewBox="0 0 15 14"><rect x="0.5" y="0.5" width="9" height="8" fill="#f2f2f2" stroke="#aaa"/><rect x="5.5" y="5.5" width="9" height="8" fill="#d8d8d8" stroke="#aaa"/></svg>
<svg class="a" style="left:1147px;top:112px;" width="14" height="14" viewBox="0 0 14 14"><path d="M0.5 2.5H9L13.5 7V13.5H0.5Z" fill="#f4f4f4" stroke="#aaa"/><rect x="6" y="6" width="5" height="6" fill="#ddd" stroke="#aaa" stroke-width="0.6"/></svg>
<div class="t" style="left:1166px;top:63px;font-size:12px;color:#8a8a8a;">上一层</div>
<svg class="a" style="left:1208px;top:68px;" width="6" height="4" viewBox="0 0 6 4"><path d="M0 0H6L3.0 4Z" fill="#aab"/></svg>
<div class="t" style="left:1166px;top:88px;font-size:12px;color:#8a8a8a;">下一层</div>
<svg class="a" style="left:1208px;top:93px;" width="6" height="4" viewBox="0 0 6 4"><path d="M0 0H6L3.0 4Z" fill="#aab"/></svg>
<div class="t" style="left:1166px;top:113px;font-size:12px;color:#8a8a8a;">锁定</div>
<svg class="a" style="left:1222px;top:63px;" width="14" height="14" viewBox="0 0 14 14"><rect x="0" y="0" width="2" height="14" fill="#333"/><path d="M4 3H12V6H4M4 9H10V12H4" fill="none" stroke="#999" stroke-width="1"/></svg>
<svg class="a" style="left:1221px;top:87px;" width="16" height="15" viewBox="0 0 16 15"><rect x="2.5" y="2.5" width="11" height="10" fill="none" stroke="#444" stroke-width="0.9"/><rect x="5" y="5" width="6" height="5" fill="none" stroke="#999" stroke-width="0.8"/><rect x="0" y="0" width="3" height="3" fill="#333"/><rect x="13" y="0" width="3" height="3" fill="#333"/><rect x="0" y="12" width="3" height="3" fill="#333"/><rect x="13" y="12" width="3" height="3" fill="#333"/></svg>
<svg class="a" style="left:1221px;top:112px;" width="16" height="14" viewBox="0 0 16 14"><path d="M9 13.5L15 13.5L13 1Z" fill="#999"/><path d="M0.5 13.5H7.5L7 5Z" fill="#ddd" stroke="#aaa" stroke-width="0.6"/><path d="M2 5Q3 1 7 2" fill="none" stroke="#888" stroke-width="0.9"/></svg>
<div class="t" style="left:1241px;top:63px;font-size:12px;color:#8a8a8a;">对齐</div>
<svg class="a" style="left:1268px;top:68px;" width="6" height="4" viewBox="0 0 6 4"><path d="M0 0H6L3.0 4Z" fill="#aab"/></svg>
<div class="t" style="left:1241px;top:88px;font-size:12px;color:#8a8a8a;">编组</div>
<svg class="a" style="left:1268px;top:93px;" width="6" height="4" viewBox="0 0 6 4"><path d="M0 0H6L3.0 4Z" fill="#aab"/></svg>
<div class="t" style="left:1241px;top:113px;font-size:12px;color:#8a8a8a;">旋转</div>
<svg class="a" style="left:1268px;top:118px;" width="6" height="4" viewBox="0 0 6 4"><path d="M0 0H6L3.0 4Z" fill="#aab"/></svg>
<div class="a" style="left:0px;top:137px;width:34px;height:545px;background:#ececec"></div>
<div class="a" style="left:34px;top:137px;width:1px;height:545px;background:#c4c4c4"></div>
<svg class="a" style="left:10px;top:144px;" width="12" height="11" viewBox="0 0 12 11"><path d="M8 0V11L0 5.5Z" fill="#9a9a9a"/><rect x="9.5" y="0" width="2.5" height="11" fill="#9a9a9a"/></svg>
<svg class="a" style="left:5px;top:170px;" width="24" height="17" viewBox="0 0 24 17"><path d="M3 5L21 2L23 14L5 17Z" fill="none" stroke="#6c6c6c" stroke-width="2.4" stroke-linejoin="round"/><path d="M7 13L9 9L11 12L13 8L15 11L17 9L19 12L7 14Z" fill="#6c6c6c"/><path d="M2 7Q3 1 9 1" fill="none" stroke="#6c6c6c" stroke-width="2"/><path d="M8 -1.5L11.5 1L8 3.5Z" fill="#6c6c6c"/></svg>
<div class="t" style="left:4px;top:195px;font-size:13px;color:#505050;">图库</div>
<svg class="a" style="left:5px;top:221px;" width="24" height="20" viewBox="0 0 24 20"><rect x="1.2" y="1.2" width="21.6" height="17.6" fill="none" stroke="#6c6c6c" stroke-width="2.4"/><path d="M2 15Q6 14 10 10Q14 6 22 6" fill="none" stroke="#6c6c6c" stroke-width="1.4"/></svg>
<div class="t" style="left:4px;top:248px;font-size:13px;color:#505050;">背景</div>
<svg class="a" style="left:5px;top:271px;" width="24" height="24" viewBox="0 0 24 24"><rect x="1.5" y="1.5" width="21" height="21" fill="none" stroke="#6c6c6c" stroke-width="3" stroke-dasharray="2 1"/><rect x="3.5" y="3.5" width="17" height="17" fill="none" stroke="#bbb" stroke-width="0.8"/></svg>
<div class="t" style="left:4px;top:300px;font-size:13px;color:#505050;">边框</div>
<svg class="a" style="left:5px;top:323px;" width="24" height="24" viewBox="0 0 24 24"><path d="M5 2L8.5 5.5L12 0.5L15.5 5.5L19 2V9Q19 15 12 15Q5 15 5 9Z" fill="#6c6c6c"/><rect x="10.5" y="13" width="3" height="11" fill="#6c6c6c"/><path d="M0 12.5Q10 12 10.5 24H1Q0 18 0 12.5Z" fill="#6c6c6c"/><path d="M24 12.5Q14 12 13.5 24H23Q24 18 24 12.5Z" fill="#6c6c6c"/></svg>
<div class="t" style="left:4px;top:352px;font-size:13px;color:#505050;">素材</div>
<svg class="a" style="left:5px;top:375px;" width="24" height="24" viewBox="0 0 24 24"><rect x="0" y="0" width="24" height="24" fill="#6c6c6c"/><rect x="2.0" y="2.0" width="5.6" height="5.6" fill="#ececec"/><rect x="2.0" y="9.3" width="5.6" height="5.6" fill="#ececec"/><rect x="2.0" y="16.6" width="5.6" height="5.6" fill="#ececec"/><rect x="9.3" y="2.0" width="5.6" height="5.6" fill="#ececec"/><rect x="9.3" y="9.3" width="5.6" height="5.6" fill="#ececec"/><rect x="9.3" y="16.6" width="5.6" height="5.6" fill="#ececec"/><rect x="16.6" y="2.0" width="5.6" height="5.6" fill="#ececec"/><rect x="16.6" y="9.3" width="5.6" height="5.6" fill="#ececec"/><rect x="16.6" y="16.6" width="5.6" height="5.6" fill="#ececec"/></svg>
<div class="t" style="left:4px;top:404px;font-size:13px;color:#505050;">版式</div>
<div class="a" style="left:1px;top:423px;width:34px;height:52px;background:#fff;border:1px solid #c4c4c4;border-right:none"></div>
<svg class="a" style="left:5px;top:427px;" width="24" height="24" viewBox="0 0 24 24"><rect x="0" y="0" width="24" height="24" fill="#e4600a"/><rect x="3" y="3" width="18" height="18" fill="none" stroke="#fff" stroke-width="1.6"/><rect x="3" y="8" width="18" height="1.6" fill="#fff"/><rect x="3" y="9" width="8" height="12" fill="#fff" opacity="0"/><rect x="11" y="9" width="1.6" height="12" fill="#fff"/><rect x="13" y="13" width="8" height="1.5" fill="#fff"/><rect x="13" y="17" width="8" height="1.5" fill="#fff"/></svg>
<div class="t" style="left:4px;top:455px;font-size:13px;color:#d85c0c;">模板</div>
<svg class="a" style="left:5px;top:478px;" width="24" height="24" viewBox="0 0 24 24"><g fill="#6c6c6c"><circle cx="20.30" cy="12.00" r="4.2"/><circle cx="17.87" cy="17.87" r="4.2"/><circle cx="12.01" cy="20.30" r="4.2"/><circle cx="6.14" cy="17.88" r="4.2"/><circle cx="3.70" cy="12.01" r="4.2"/><circle cx="6.12" cy="6.14" r="4.2"/><circle cx="11.98" cy="3.70" r="4.2"/><circle cx="17.85" cy="6.11" r="4.2"/><circle cx="12" cy="12" r="9"/></g></svg>
<div class="t" style="left:4px;top:508px;font-size:13px;color:#505050;">形状</div>
<svg class="a" style="left:5px;top:531px;" width="24" height="24" viewBox="0 0 24 24"><path d="M12 1L15 8.5L23 9L17 14.5L19 23L12 18.5L5 23L7 14.5L1 9L9 8.5Z" fill="#6c6c6c" stroke="#6c6c6c" stroke-width="1.5" stroke-linejoin="round"/></svg>
<div class="t" style="left:4px;top:560px;font-size:13px;color:#505050;">收藏</div>
<svg class="a" style="left:5px;top:583px;" width="25" height="23" viewBox="0 0 25 23"><path d="M11 1C5.5 1 1.5 4.5 1.5 9C1.5 11.5 3 13.5 5 15L4 19L8.5 16.5C9.3 16.7 10.1 16.8 11 16.8C16.5 16.8 20.5 13.3 20.5 9C20.5 4.5 16.5 1 11 1Z" fill="#fff" stroke="#2a9ad8" stroke-width="1.6"/><path d="M21 10Q24 13 22 17L23 21L19.5 19Q16 20 12 18" fill="none" stroke="#2a9ad8" stroke-width="1.6"/><circle cx="7" cy="9" r="1.2" fill="#2a9ad8"/><circle cx="11" cy="9" r="1.2" fill="#2a9ad8"/><circle cx="15" cy="9" r="1.2" fill="#2a9ad8"/></svg>
<div class="t" style="left:4px;top:612px;font-size:13px;color:#2a9ad8;">客服</div>
<div class="a" style="left:35px;top:137px;width:199px;height:545px;background:#fff"></div>
<div class="a" style="left:35px;top:137px;width:199px;height:26px;background:linear-gradient(#fdfdfd,#e9e9e9)"></div>
<div class="a" style="left:35px;top:162px;width:199px;height:1px;background:#f0a040"></div>
<div class="a" style="left:43px;top:142px;width:62px;height:21px;background:#d1700a"></div>
<div class="t" style="left:49px;top:146px;font-size:13px;color:#fff;">在线模板</div>
<div class="a" style="left:234px;top:137px;width:16px;height:545px;background:#efefef;border-left:1px solid #e2e2e2"></div>
<svg class="a" style="left:236px;top:144px;" width="12" height="7" viewBox="0 0 12 7"><path d="M1 6L6 1L11 6Z" fill="#555"/></svg>
<div class="a" style="left:235px;top:188px;width:13px;height:24px;background:linear-gradient(90deg,#f4f4f4,#dcdcdc);border:1px solid #a8a8a8;border-radius:3px"></div>
<svg class="a" style="left:238px;top:196px;" width="8" height="7" viewBox="0 0 8 7"><path d="M0 0.5H8M0 3H8M0 5.5H8" stroke="#777" stroke-width="0.8"/></svg>
<div class="a" style="left:42px;top:163px;width:184px;height:74px;background:#fff;border:1px solid #dadada;border-top:none"></div>
<svg class="a" style="left:0;top:0" width="250" height="682"><path d="M152 169.6H211" stroke="#c2c2c2" stroke-width="1.3" stroke-dasharray="1.6 0.6"/><path d="M147 173.6H211" stroke="#c2c2c2" stroke-width="1.3" stroke-dasharray="1.6 0.6"/><path d="M147 177.6H211" stroke="#c2c2c2" stroke-width="1.3" stroke-dasharray="1.6 0.6"/><path d="M147 181.6H185.4" stroke="#c2c2c2" stroke-width="1.3" stroke-dasharray="1.6 0.6"/><path d="M152 185.6H211" stroke="#c2c2c2" stroke-width="1.3" stroke-dasharray="1.6 0.6"/><path d="M147 189.6H185.4" stroke="#c2c2c2" stroke-width="1.3" stroke-dasharray="1.6 0.6"/><path d="M161 201.0H186" stroke="#b4b4b4" stroke-width="1.2" stroke-dasharray="1.6 0.6"/><path d="M161 205.2H178" stroke="#b4b4b4" stroke-width="1.2" stroke-dasharray="1.6 0.6"/><path d="M161 209.4H192" stroke="#b4b4b4" stroke-width="1.2" stroke-dasharray="1.6 0.6"/><path d="M161 213.6H186" stroke="#b4b4b4" stroke-width="1.2" stroke-dasharray="1.6 0.6"/><path d="M161 217.8H178" stroke="#b4b4b4" stroke-width="1.2" stroke-dasharray="1.6 0.6"/><path d="M161 222.0H191" stroke="#b4b4b4" stroke-width="1.2" stroke-dasharray="1.6 0.6"/><rect x="202" y="229" width="4" height="1.5" fill="#999"/><rect x="211" y="229" width="1" height="6" fill="#555"/></svg>
<div class="t" style="left:122px;top:244px;font-size:16px;color:#111;">4-5</div>
<div class="a" style="left:42px;top:265px;width:184px;height:138px;background:#fff;border:1px solid #e2e2e2;box-shadow:0 1px 1px rgba(0,0,0,0.05)"></div>
<svg class="a" style="left:0;top:0" width="250" height="682"><rect x="57" y="278" width="12" height="1.3" fill="#999"/><path d="M62 283.6H122" stroke="#c2c2c2" stroke-width="1.3" stroke-dasharray="1.6 0.6"/><path d="M57 287.5H122" stroke="#c2c2c2" stroke-width="1.3" stroke-dasharray="1.6 0.6"/><path d="M57 291.40000000000003H122" stroke="#c2c2c2" stroke-width="1.3" stroke-dasharray="1.6 0.6"/><path d="M57 295.3H96.0" stroke="#c2c2c2" stroke-width="1.3" stroke-dasharray="1.6 0.6"/><path d="M62 299.6H122" stroke="#c2c2c2" stroke-width="1.3" stroke-dasharray="1.6 0.6"/><path d="M57 303.5H122" stroke="#c2c2c2" stroke-width="1.3" stroke-dasharray="1.6 0.6"/><path d="M57 307.40000000000003H122" stroke="#c2c2c2" stroke-width="1.3" stroke-dasharray="1.6 0.6"/><path d="M57 311.3H122" stroke="#c2c2c2" stroke-width="1.3" stroke-dasharray="1.6 0.6"/><path d="M57 315.20000000000005H122" stroke="#c2c2c2" stroke-width="1.3" stroke-dasharray="1.6 0.6"/><path d="M57 319.1H122" stroke="#c2c2c2" stroke-width="1.3" stroke-dasharray="1.6 0.6"/><path d="M57 323.0H96.0" stroke="#c2c2c2" stroke-width="1.3" stroke-dasharray="1.6 0.6"/><rect x="80" y="332" width="13" height="1.5" fill="#888"/><path d="M62 340.6H122" stroke="#c2c2c2" stroke-width="1.3" stroke-dasharray="1.6 0.6"/><path d="M57 344.5H122" stroke="#c2c2c2" stroke-width="1.3" stroke-dasharray="1.6 0.6"/><path d="M57 348.40000000000003H96.0" stroke="#c2c2c2" stroke-width="1.3" stroke-dasharray="1.6 0.6"/><path d="M62 352.6H122" stroke="#c2c2c2" stroke-width="1.3" stroke-dasharray="1.6 0.6"/><path d="M57 356.5H122" stroke="#c2c2c2" stroke-width="1.3" stroke-dasharray="1.6 0.6"/><path d="M57 360.40000000000003H122" stroke="#c2c2c2" stroke-width="1.3" stroke-dasharray="1.6 0.6"/><path d="M57 364.3H122" stroke="#c2c2c2" stroke-width="1.3" stroke-dasharray="1.6 0.6"/><path d="M57 368.20000000000005H122" stroke="#c2c2c2" stroke-width="1.3" stroke-dasharray="1.6 0.6"/><path d="M57 372.1H122" stroke="#c2c2c2" stroke-width="1.3" stroke-dasharray="1.6 0.6"/><path d="M57 376.0H122" stroke="#c2c2c2" stroke-width="1.3" stroke-dasharray="1.6 0.6"/><path d="M57 379.90000000000003H122" stroke="#c2c2c2" stroke-width="1.3" stroke-dasharray="1.6 0.6"/><path d="M57 383.8H96.0" stroke="#c2c2c2" stroke-width="1.3" stroke-dasharray="1.6 0.6"/><path d="M146 283.6H211" stroke="#c2c2c2" stroke-width="1.3" stroke-dasharray="1.6 0.6"/><path d="M146 287.5H211" stroke="#c2c2c2" stroke-width="1.3" stroke-dasharray="1.6 0.6"/><path d="M146 291.40000000000003H211" stroke="#c2c2c2" stroke-width="1.3" stroke-dasharray="1.6 0.6"/><path d="M146 295.3H211" stroke="#c2c2c2" stroke-width="1.3" stroke-dasharray="1.6 0.6"/><path d="M146 299.20000000000005H211" stroke="#c2c2c2" stroke-width="1.3" stroke-dasharray="1.6 0.6"/><path d="M146 303.1H185.0" stroke="#c2c2c2" stroke-width="1.3" stroke-dasharray="1.6 0.6"/><rect x="170" y="312" width="13" height="1.5" fill="#888"/><path d="M151 319.6H211" stroke="#c2c2c2" stroke-width="1.3" stroke-dasharray="1.6 0.6"/><path d="M146 323.5H185.0" stroke="#c2c2c2" stroke-width="1.3" stroke-dasharray="1.6 0.6"/><path d="M151 327.6H211" stroke="#c2c2c2" stroke-width="1.3" stroke-dasharray="1.6 0.6"/><path d="M146 331.5H211" stroke="#c2c2c2" stroke-width="1.3" stroke-dasharray="1.6 0.6"/><path d="M146 335.40000000000003H185.0" stroke="#c2c2c2" stroke-width="1.3" stroke-dasharray="1.6 0.6"/><path d="M151 339.6H211" stroke="#c2c2c2" stroke-width="1.3" stroke-dasharray="1.6 0.6"/><path d="M146 343.5H211" stroke="#c2c2c2" stroke-width="1.3" stroke-dasharray="1.6 0.6"/><path d="M146 347.40000000000003H211" stroke="#c2c2c2" stroke-width="1.3" stroke-dasharray="1.6 0.6"/><path d="M146 351.3H211" stroke="#c2c2c2" stroke-width="1.3" stroke-dasharray="1.6 0.6"/><path d="M146 355.20000000000005H185.0" stroke="#c2c2c2" stroke-width="1.3" stroke-dasharray="1.6 0.6"/><path d="M151 363.6H211" stroke="#c2c2c2" stroke-width="1.3" stroke-dasharray="1.6 0.6"/><path d="M146 367.5H211" stroke="#c2c2c2" stroke-width="1.3" stroke-dasharray="1.6 0.6"/><path d="M146 371.40000000000003H211" stroke="#c2c2c2" stroke-width="1.3" stroke-dasharray="1.6 0.6"/><path d="M146 375.3H211" stroke="#c2c2c2" stroke-width="1.3" stroke-dasharray="1.6 0.6"/><path d="M146 379.20000000000005H211" stroke="#c2c2c2" stroke-width="1.3" stroke-dasharray="1.6 0.6"/><path d="M146 383.1H185.0" stroke="#c2c2c2" stroke-width="1.3" stroke-dasharray="1.6 0.6"/><rect x="55" y="393" width="1" height="6" fill="#555"/><rect x="61" y="395" width="4" height="1.5" fill="#999"/><rect x="200" y="395" width="4" height="1.5" fill="#999"/><rect x="211" y="393" width="1" height="6" fill="#555"/></svg>
<div class="t" style="left:122px;top:410px;font-size:16px;color:#111;">6-7</div>
<div class="a" style="left:42px;top:431px;width:185px;height:139px;background:#fff;border:2.5px solid #2e60b2"></div>
<svg class="a" style="left:0;top:0" width="250" height="682"><path d="M57 445H67" stroke="#aaa" stroke-width="1" stroke-dasharray="1.5 0.5"/><path d="M84 463.6H94" stroke="#999" stroke-width="1.5" stroke-dasharray="2 0.7"/><path d="M83 468H93" stroke="#bbb" stroke-width="1" stroke-dasharray="1.5 0.6"/><path d="M83 473.8H97" stroke="#b4b4b4" stroke-width="1.2" stroke-dasharray="1.6 0.6"/><path d="M83 478.1H94" stroke="#b4b4b4" stroke-width="1.2" stroke-dasharray="1.6 0.6"/><path d="M83 483H102" stroke="#b4b4b4" stroke-width="1.2" stroke-dasharray="1.6 0.6"/><path d="M83 491H100" stroke="#b4b4b4" stroke-width="1.2" stroke-dasharray="1.6 0.6"/><path d="M83 495.4H94" stroke="#b4b4b4" stroke-width="1.2" stroke-dasharray="1.6 0.6"/><path d="M83 503.3H97" stroke="#b4b4b4" stroke-width="1.2" stroke-dasharray="1.6 0.6"/><path d="M83 507.2H94" stroke="#b4b4b4" stroke-width="1.2" stroke-dasharray="1.6 0.6"/><path d="M83 511.5H101" stroke="#b4b4b4" stroke-width="1.2" stroke-dasharray="1.6 0.6"/><path d="M83 519.7H101" stroke="#b4b4b4" stroke-width="1.2" stroke-dasharray="1.6 0.6"/><path d="M83 524H94" stroke="#b4b4b4" stroke-width="1.2" stroke-dasharray="1.6 0.6"/><path d="M174 463.6H184" stroke="#999" stroke-width="1.5" stroke-dasharray="2 0.7"/><path d="M173 468H183" stroke="#bbb" stroke-width="1" stroke-dasharray="1.5 0.6"/><path d="M173 473.8H187" stroke="#b4b4b4" stroke-width="1.2" stroke-dasharray="1.6 0.6"/><path d="M173 478.1H184" stroke="#b4b4b4" stroke-width="1.2" stroke-dasharray="1.6 0.6"/><path d="M173 483H192" stroke="#b4b4b4" stroke-width="1.2" stroke-dasharray="1.6 0.6"/><path d="M173 491H190" stroke="#b4b4b4" stroke-width="1.2" stroke-dasharray="1.6 0.6"/><path d="M173 495.4H184" stroke="#b4b4b4" stroke-width="1.2" stroke-dasharray="1.6 0.6"/><path d="M173 503.3H187" stroke="#b4b4b4" stroke-width="1.2" stroke-dasharray="1.6 0.6"/><path d="M173 507.2H184" stroke="#b4b4b4" stroke-width="1.2" stroke-dasharray="1.6 0.6"/><path d="M173 511.5H191" stroke="#b4b4b4" stroke-width="1.2" stroke-dasharray="1.6 0.6"/><path d="M173 519.7H191" stroke="#b4b4b4" stroke-width="1.2" stroke-dasharray="1.6 0.6"/><path d="M173 524H184" stroke="#b4b4b4" stroke-width="1.2" stroke-dasharray="1.6 0.6"/><path d="M62 533.6H122" stroke="#c2c2c2" stroke-width="1.3" stroke-dasharray="1.6 0.6"/><path d="M57 537.2H122" stroke="#c2c2c2" stroke-width="1.3" stroke-dasharray="1.6 0.6"/><path d="M57 540.8000000000001H122" stroke="#c2c2c2" stroke-width="1.3" stroke-dasharray="1.6 0.6"/><path d="M57 544.4H122" stroke="#c2c2c2" stroke-width="1.3" stroke-dasharray="1.6 0.6"/><path d="M57 548.0H122" stroke="#c2c2c2" stroke-width="1.3" stroke-dasharray="1.6 0.6"/><path d="M57 551.6H96.0" stroke="#c2c2c2" stroke-width="1.3" stroke-dasharray="1.6 0.6"/><path d="M152 533.6H212" stroke="#c2c2c2" stroke-width="1.3" stroke-dasharray="1.6 0.6"/><path d="M147 537.2H212" stroke="#c2c2c2" stroke-width="1.3" stroke-dasharray="1.6 0.6"/><path d="M147 540.8000000000001H212" stroke="#c2c2c2" stroke-width="1.3" stroke-dasharray="1.6 0.6"/><path d="M147 544.4H212" stroke="#c2c2c2" stroke-width="1.3" stroke-dasharray="1.6 0.6"/><path d="M147 548.0H212" stroke="#c2c2c2" stroke-width="1.3" stroke-dasharray="1.6 0.6"/><path d="M147 551.6H186.0" stroke="#c2c2c2" stroke-width="1.3" stroke-dasharray="1.6 0.6"/><rect x="55" y="560" width="1" height="6" fill="#555"/><rect x="62" y="561" width="4" height="1.5" fill="#999"/><rect x="201" y="561" width="4" height="1.5" fill="#999"/><rect x="212" y="560" width="1" height="6" fill="#555"/></svg>
<div class="t" style="left:122px;top:576px;font-size:16px;color:#111;">8-9</div>
<div class="a" style="left:42px;top:597px;width:185px;height:103px;background:#fff;border:2.5px solid #2e60b2"></div>
<svg class="a" style="left:0;top:0" width="250" height="682"><rect x="57" y="611" width="10" height="1" fill="#aaa"/></svg>
<div class="a" style="left:250px;top:137px;width:1115px;height:26px;background:#87a7d5"></div>
<div class="a" style="left:250px;top:137px;width:1115px;height:1px;background:#dfe7f2"></div>
<svg class="a" style="left:251px;top:138px;" width="115" height="24" viewBox="0 0 115 24"><defs><linearGradient id="tg251" x1="0" y1="0" x2="0" y2="1"><stop offset="0" stop-color="#d6e7fb"/><stop offset="0.45" stop-color="#bdd7f7"/><stop offset="0.5" stop-color="#a7c9f2"/><stop offset="1" stop-color="#a6c8f2"/></linearGradient></defs><path d="M0.5 23.5V4.5Q0.5 0.5 4.5 0.5H101C107 0.5 110.5 5 110.5 11V23.5Z" fill="url(#tg251)" stroke="#7d9cc8" stroke-width="1"/><path d="M1.5 23.5V5Q1.5 1.5 5 1.5" fill="none" stroke="#fff" stroke-opacity="0.6"/></svg>
<svg class="a" style="left:363px;top:138px;" width="103" height="24" viewBox="0 0 103 24"><defs><linearGradient id="tg363" x1="0" y1="0" x2="0" y2="1"><stop offset="0" stop-color="#d6e7fb"/><stop offset="0.45" stop-color="#bdd7f7"/><stop offset="0.5" stop-color="#a7c9f2"/><stop offset="1" stop-color="#a6c8f2"/></linearGradient></defs><path d="M0.5 23.5V4.5Q0.5 0.5 4.5 0.5H89C95 0.5 98.5 5 98.5 11V23.5Z" fill="url(#tg363)" stroke="#7d9cc8" stroke-width="1"/><path d="M1.5 23.5V5Q1.5 1.5 5 1.5" fill="none" stroke="#fff" stroke-opacity="0.6"/></svg>
<svg class="a" style="left:463px;top:138px;" width="127" height="24" viewBox="0 0 127 24"><defs><linearGradient id="tg463" x1="0" y1="0" x2="0" y2="1"><stop offset="0" stop-color="#d6e7fb"/><stop offset="0.45" stop-color="#bdd7f7"/><stop offset="0.5" stop-color="#a7c9f2"/><stop offset="1" stop-color="#a6c8f2"/></linearGradient></defs><path d="M0.5 23.5V4.5Q0.5 0.5 4.5 0.5H113C119 0.5 122.5 5 122.5 11V23.5Z" fill="url(#tg463)" stroke="#7d9cc8" stroke-width="1"/><path d="M1.5 23.5V5Q1.5 1.5 5 1.5" fill="none" stroke="#fff" stroke-opacity="0.6"/></svg>
<svg class="a" style="left:587px;top:138px;" width="405" height="24" viewBox="0 0 405 24"><defs><linearGradient id="tg587" x1="0" y1="0" x2="0" y2="1"><stop offset="0" stop-color="#fde3b8"/><stop offset="0.45" stop-color="#fcc77e"/><stop offset="0.52" stop-color="#fbb444"/><stop offset="1" stop-color="#fddc70"/></linearGradient></defs><path d="M0.5 23.5V4.5Q0.5 0.5 4.5 0.5H381Q386 0.5 389 5L397 20.5Q399 23.5 403 23.5Z" fill="url(#tg587)" stroke="#76654a" stroke-width="1"/><path d="M1.5 23.5V5Q1.5 1.5 5 1.5" fill="none" stroke="#fff" stroke-opacity="0.6"/></svg>
<svg class="a" style="left:257px;top:142px;" width="16" height="16" viewBox="0 0 16 16"><defs><radialGradient id="dg257" cx="50%" cy="30%" r="70%"><stop offset="0" stop-color="#ffc21a"/><stop offset="1" stop-color="#f07a0a"/></radialGradient></defs><circle cx="8.0" cy="8.0" r="7.5" fill="url(#dg257)"/><text x="8.0" y="10.6" font-size="7" fill="#fff3c0" text-anchor="middle" font-family="Liberation Sans">DPS</text></svg>
<div class="t" style="left:276px;top:145px;font-size:12px;color:#111;">视频教程</div>
<svg class="a" style="left:335px;top:146.5px;" width="11" height="9" viewBox="0 0 11 9"><path d="M2 1.5L9 7.5M9 1.5L2 7.5" stroke="#3a4660" stroke-width="4.2" stroke-linecap="round"/><path d="M2 1.5L9 7.5M9 1.5L2 7.5" stroke="#e4e4ea" stroke-width="2.2" stroke-linecap="round"/></svg>
<svg class="a" style="left:369px;top:142px;" width="16" height="16" viewBox="0 0 16 16"><defs><radialGradient id="dg369" cx="50%" cy="30%" r="70%"><stop offset="0" stop-color="#ffc21a"/><stop offset="1" stop-color="#f07a0a"/></radialGradient></defs><circle cx="8.0" cy="8.0" r="7.5" fill="url(#dg369)"/><text x="8.0" y="10.6" font-size="7" fill="#fff3c0" text-anchor="middle" font-family="Liberation Sans">DPS</text></svg>
<div class="t" style="left:388px;top:145px;font-size:12px;color:#111;">欢迎页</div>
<svg class="a" style="left:435px;top:146.5px;" width="11" height="9" viewBox="0 0 11 9"><path d="M2 1.5L9 7.5M9 1.5L2 7.5" stroke="#3a4660" stroke-width="4.2" stroke-linecap="round"/><path d="M2 1.5L9 7.5M9 1.5L2 7.5" stroke="#e4e4ea" stroke-width="2.2" stroke-linecap="round"/></svg>
<svg class="a" style="left:469px;top:142px;" width="16" height="16" viewBox="0 0 16 16"><defs><radialGradient id="dg469" cx="50%" cy="30%" r="70%"><stop offset="0" stop-color="#ffc21a"/><stop offset="1" stop-color="#f07a0a"/></radialGradient></defs><circle cx="8.0" cy="8.0" r="7.5" fill="url(#dg469)"/><text x="8.0" y="10.6" font-size="7" fill="#fff3c0" text-anchor="middle" font-family="Liberation Sans">DPS</text></svg>
<div class="t" style="left:488px;top:145px;font-size:12px;color:#111;">模板库：书</div>
<svg class="a" style="left:559px;top:146.5px;" width="11" height="9" viewBox="0 0 11 9"><path d="M2 1.5L9 7.5M9 1.5L2 7.5" stroke="#3a4660" stroke-width="4.2" stroke-linecap="round"/><path d="M2 1.5L9 7.5M9 1.5L2 7.5" stroke="#e4e4ea" stroke-width="2.2" stroke-linecap="round"/></svg>
<svg class="a" style="left:592px;top:142px;" width="16" height="16" viewBox="0 0 16 16"><defs><radialGradient id="dg592" cx="50%" cy="30%" r="70%"><stop offset="0" stop-color="#ffc21a"/><stop offset="1" stop-color="#f07a0a"/></radialGradient></defs><circle cx="8.0" cy="8.0" r="7.5" fill="url(#dg592)"/><text x="8.0" y="10.6" font-size="7" fill="#fff3c0" text-anchor="middle" font-family="Liberation Sans">DPS</text></svg>
<div class="t" style="left:612px;top:145px;font-size:12px;color:#111">书<span style="font-family:'Liberation Mono',monospace;font-size:10px">-</span>大<span style="font-family:'Liberation Mono',monospace;font-size:10px">32</span>开软皮平装<span style="font-family:'Liberation Mono',monospace;font-size:10px">-</span>散文集诗集回忆录封面<span style="font-family:'Liberation Mono',monospace;font-size:10px">190529-1150.dpsf*</span></div>
<svg class="a" style="left:953px;top:146.5px;" width="11" height="9" viewBox="0 0 11 9"><path d="M2 1.5L9 7.5M9 1.5L2 7.5" stroke="#5a4a30" stroke-width="4.2" stroke-linecap="round"/><path d="M2 1.5L9 7.5M9 1.5L2 7.5" stroke="#e8e4e0" stroke-width="2.2" stroke-linecap="round"/></svg>
<div class="a" style="left:250px;top:163px;width:1098px;height:16px;background:#fff"></div>
<div class="a" style="left:250px;top:179px;width:1098px;height:1.3px;background:#111"></div>
<svg class="a" style="left:250px;top:162px;" width="1098" height="17" viewBox="0 0 1098 17"><rect x="18.43" y="13" width="1" height="4" fill="#111"/><rect x="21.68" y="13" width="1" height="4" fill="#111"/><rect x="24.92" y="13" width="1" height="4" fill="#111"/><rect x="28.17" y="13" width="1" height="4" fill="#111"/><rect x="31.42" y="4" width="1.2" height="13" fill="#111"/><rect x="34.67" y="13" width="1" height="4" fill="#111"/><rect x="37.92" y="13" width="1" height="4" fill="#111"/><rect x="41.16" y="13" width="1" height="4" fill="#111"/><rect x="44.41" y="13" width="1" height="4" fill="#111"/><rect x="47.66" y="13" width="1" height="4" fill="#111"/><rect x="50.91" y="13" width="1" height="4" fill="#111"/><rect x="54.16" y="13" width="1" height="4" fill="#111"/><rect x="57.40" y="13" width="1" height="4" fill="#111"/><rect x="60.65" y="13" width="1" height="4" fill="#111"/><rect x="63.90" y="4" width="1.2" height="13" fill="#111"/><rect x="67.15" y="13" width="1" height="4" fill="#111"/><rect x="70.40" y="13" width="1" height="4" fill="#111"/><rect x="73.64" y="13" width="1" height="4" fill="#111"/><rect x="76.89" y="13" width="1" height="4" fill="#111"/><rect x="80.14" y="13" width="1" height="4" fill="#111"/><rect x="83.39" y="13" width="1" height="4" fill="#111"/><rect x="86.64" y="13" width="1" height="4" fill="#111"/><rect x="89.88" y="13" width="1" height="4" fill="#111"/><rect x="93.13" y="13" width="1" height="4" fill="#111"/><rect x="96.38" y="4" width="1.2" height="13" fill="#111"/><rect x="99.63" y="13" width="1" height="4" fill="#111"/><rect x="102.88" y="13" width="1" height="4" fill="#111"/><rect x="106.12" y="13" width="1" height="4" fill="#111"/><rect x="109.37" y="13" width="1" height="4" fill="#111"/><rect x="112.62" y="13" width="1" height="4" fill="#111"/><rect x="115.87" y="13" width="1" height="4" fill="#111"/><rect x="119.12" y="13" width="1" height="4" fill="#111"/><rect x="122.36" y="13" width="1" height="4" fill="#111"/><rect x="125.61" y="13" width="1" height="4" fill="#111"/><rect x="128.86" y="4" width="1.2" height="13" fill="#111"/><rect x="132.11" y="13" width="1" height="4" fill="#111"/><rect x="135.36" y="13" width="1" height="4" fill="#111"/><rect x="138.60" y="13" width="1" height="4" fill="#111"/><rect x="141.85" y="13" width="1" height="4" fill="#111"/><rect x="145.10" y="13" width="1" height="4" fill="#111"/><rect x="148.35" y="13" width="1" height="4" fill="#111"/><rect x="151.60" y="13" width="1" height="4" fill="#111"/><rect x="154.84" y="13" width="1" height="4" fill="#111"/><rect x="158.09" y="13" width="1" height="4" fill="#111"/><rect x="161.34" y="4" width="1.2" height="13" fill="#111"/><rect x="164.59" y="13" width="1" height="4" fill="#111"/><rect x="167.84" y="13" width="1" height="4" fill="#111"/><rect x="171.08" y="13" width="1" height="4" fill="#111"/><rect x="174.33" y="13" width="1" height="4" fill="#111"/><rect x="177.58" y="13" width="1" height="4" fill="#111"/><rect x="180.83" y="13" width="1" height="4" fill="#111"/><rect x="184.08" y="13" width="1" height="4" fill="#111"/><rect x="187.32" y="13" width="1" height="4" fill="#111"/><rect x="190.57" y="13" width="1" height="4" fill="#111"/><rect x="193.82" y="4" width="1.2" height="13" fill="#111"/><rect x="197.07" y="13" width="1" height="4" fill="#111"/><rect x="200.32" y="13" width="1" height="4" fill="#111"/><rect x="203.56" y="13" width="1" height="4" fill="#111"/><rect x="206.81" y="13" width="1" height="4" fill="#111"/><rect x="210.06" y="13" width="1" height="4" fill="#111"/><rect x="213.31" y="13" width="1" height="4" fill="#111"/><rect x="216.56" y="13" width="1" height="4" fill="#111"/><rect x="219.80" y="13" width="1" height="4" fill="#111"/><rect x="223.05" y="13" width="1" height="4" fill="#111"/><rect x="226.30" y="4" width="1.2" height="13" fill="#111"/><rect x="229.55" y="13" width="1" height="4" fill="#111"/><rect x="232.80" y="13" width="1" height="4" fill="#111"/><rect x="236.04" y="13" width="1" height="4" fill="#111"/><rect x="239.29" y="13" width="1" height="4" fill="#111"/><rect x="242.54" y="13" width="1" height="4" fill="#111"/><rect x="245.79" y="13" width="1" height="4" fill="#111"/><rect x="249.04" y="13" width="1" height="4" fill="#111"/><rect x="252.28" y="13" width="1" height="4" fill="#111"/><rect x="255.53" y="13" width="1" height="4" fill="#111"/><rect x="258.78" y="4" width="1.2" height="13" fill="#111"/><rect x="262.03" y="13" width="1" height="4" fill="#111"/><rect x="265.28" y="13" width="1" height="4" fill="#111"/><rect x="268.52" y="13" width="1" height="4" fill="#111"/><rect x="271.77" y="13" width="1" height="4" fill="#111"/><rect x="275.02" y="13" width="1" height="4" fill="#111"/><rect x="278.27" y="13" width="1" height="4" fill="#111"/><rect x="281.52" y="13" width="1" height="4" fill="#111"/><rect x="284.76" y="13" width="1" height="4" fill="#111"/><rect x="288.01" y="13" width="1" height="4" fill="#111"/><rect x="291.26" y="4" width="1.2" height="13" fill="#111"/><rect x="294.51" y="13" width="1" height="4" fill="#111"/><rect x="297.76" y="13" width="1" height="4" fill="#111"/><rect x="301.00" y="13" width="1" height="4" fill="#111"/><rect x="304.25" y="13" width="1" height="4" fill="#111"/><rect x="307.50" y="13" width="1" height="4" fill="#111"/><rect x="310.75" y="13" width="1" height="4" fill="#111"/><rect x="314.00" y="13" width="1" height="4" fill="#111"/><rect x="317.24" y="13" width="1" height="4" fill="#111"/><rect x="320.49" y="13" width="1" height="4" fill="#111"/><rect x="323.74" y="4" width="1.2" height="13" fill="#111"/><rect x="326.99" y="13" width="1" height="4" fill="#111"/><rect x="330.24" y="13" width="1" height="4" fill="#111"/><rect x="333.48" y="13" width="1" height="4" fill="#111"/><rect x="336.73" y="13" width="1" height="4" fill="#111"/><rect x="339.98" y="13" width="1" height="4" fill="#111"/><rect x="343.23" y="13" width="1" height="4" fill="#111"/><rect x="346.48" y="13" width="1" height="4" fill="#111"/><rect x="349.72" y="13" width="1" height="4" fill="#111"/><rect x="352.97" y="13" width="1" height="4" fill="#111"/><rect x="356.22" y="4" width="1.2" height="13" fill="#111"/><rect x="359.47" y="13" width="1" height="4" fill="#111"/><rect x="362.72" y="13" width="1" height="4" fill="#111"/><rect x="365.96" y="13" width="1" height="4" fill="#111"/><rect x="369.21" y="13" width="1" height="4" fill="#111"/><rect x="372.46" y="13" width="1" height="4" fill="#111"/><rect x="375.71" y="13" width="1" height="4" fill="#111"/><rect x="378.96" y="13" width="1" height="4" fill="#111"/><rect x="382.20" y="13" width="1" height="4" fill="#111"/><rect x="385.45" y="13" width="1" height="4" fill="#111"/><rect x="388.70" y="4" width="1.2" height="13" fill="#111"/><rect x="391.95" y="13" width="1" height="4" fill="#111"/><rect x="395.20" y="13" width="1" height="4" fill="#111"/><rect x="398.44" y="13" width="1" height="4" fill="#111"/><rect x="401.69" y="13" width="1" height="4" fill="#111"/><rect x="404.94" y="13" width="1" height="4" fill="#111"/><rect x="408.19" y="13" width="1" height="4" fill="#111"/><rect x="411.44" y="13" width="1" height="4" fill="#111"/><rect x="414.68" y="13" width="1" height="4" fill="#111"/><rect x="417.93" y="13" width="1" height="4" fill="#111"/><rect x="421.18" y="4" width="1.2" height="13" fill="#111"/><rect x="424.43" y="13" width="1" height="4" fill="#111"/><rect x="427.68" y="13" width="1" height="4" fill="#111"/><rect x="430.92" y="13" width="1" height="4" fill="#111"/><rect x="434.17" y="13" width="1" height="4" fill="#111"/><rect x="437.42" y="13" width="1" height="4" fill="#111"/><rect x="440.67" y="13" width="1" height="4" fill="#111"/><rect x="443.92" y="13" width="1" height="4" fill="#111"/><rect x="447.16" y="13" width="1" height="4" fill="#111"/><rect x="450.41" y="13" width="1" height="4" fill="#111"/><rect x="453.66" y="4" width="1.2" height="13" fill="#111"/><rect x="456.91" y="13" width="1" height="4" fill="#111"/><rect x="460.16" y="13" width="1" height="4" fill="#111"/><rect x="463.40" y="13" width="1" height="4" fill="#111"/><rect x="466.65" y="13" width="1" height="4" fill="#111"/><rect x="469.90" y="13" width="1" height="4" fill="#111"/><rect x="473.15" y="13" width="1" height="4" fill="#111"/><rect x="476.40" y="13" width="1" height="4" fill="#111"/><rect x="479.64" y="13" width="1" height="4" fill="#111"/><rect x="482.89" y="13" width="1" height="4" fill="#111"/><rect x="486.14" y="4" width="1.2" height="13" fill="#111"/><rect x="489.39" y="13" width="1" height="4" fill="#111"/><rect x="492.64" y="13" width="1" height="4" fill="#111"/><rect x="495.88" y="13" width="1" height="4" fill="#111"/><rect x="499.13" y="13" width="1" height="4" fill="#111"/><rect x="502.38" y="13" width="1" height="4" fill="#111"/><rect x="505.63" y="13" width="1" height="4" fill="#111"/><rect x="508.88" y="13" width="1" height="4" fill="#111"/><rect x="512.12" y="13" width="1" height="4" fill="#111"/><rect x="515.37" y="13" width="1" height="4" fill="#111"/><rect x="518.62" y="4" width="1.2" height="13" fill="#111"/><rect x="521.87" y="13" width="1" height="4" fill="#111"/><rect x="525.12" y="13" width="1" height="4" fill="#111"/><rect x="528.36" y="13" width="1" height="4" fill="#111"/><rect x="531.61" y="13" width="1" height="4" fill="#111"/><rect x="534.86" y="13" width="1" height="4" fill="#111"/><rect x="538.11" y="13" width="1" height="4" fill="#111"/><rect x="541.36" y="13" width="1" height="4" fill="#111"/><rect x="544.60" y="13" width="1" height="4" fill="#111"/><rect x="547.85" y="13" width="1" height="4" fill="#111"/><rect x="551.10" y="4" width="1.2" height="13" fill="#111"/><rect x="554.35" y="13" width="1" height="4" fill="#111"/><rect x="557.60" y="13" width="1" height="4" fill="#111"/><rect x="560.84" y="13" width="1" height="4" fill="#111"/><rect x="564.09" y="13" width="1" height="4" fill="#111"/><rect x="567.34" y="13" width="1" height="4" fill="#111"/><rect x="570.59" y="13" width="1" height="4" fill="#111"/><rect x="573.84" y="13" width="1" height="4" fill="#111"/><rect x="577.08" y="13" width="1" height="4" fill="#111"/><rect x="580.33" y="13" width="1" height="4" fill="#111"/><rect x="583.58" y="4" width="1.2" height="13" fill="#111"/><rect x="586.83" y="13" width="1" height="4" fill="#111"/><rect x="590.08" y="13" width="1" height="4" fill="#111"/><rect x="593.32" y="13" width="1" height="4" fill="#111"/><rect x="596.57" y="13" width="1" height="4" fill="#111"/><rect x="599.82" y="13" width="1" height="4" fill="#111"/><rect x="603.07" y="13" width="1" height="4" fill="#111"/><rect x="606.32" y="13" width="1" height="4" fill="#111"/><rect x="609.56" y="13" width="1" height="4" fill="#111"/><rect x="612.81" y="13" width="1" height="4" fill="#111"/><rect x="616.06" y="4" width="1.2" height="13" fill="#111"/><rect x="619.31" y="13" width="1" height="4" fill="#111"/><rect x="622.56" y="13" width="1" height="4" fill="#111"/><rect x="625.80" y="13" width="1" height="4" fill="#111"/><rect x="629.05" y="13" width="1" height="4" fill="#111"/><rect x="632.30" y="13" width="1" height="4" fill="#111"/><rect x="635.55" y="13" width="1" height="4" fill="#111"/><rect x="638.80" y="13" width="1" height="4" fill="#111"/><rect x="642.04" y="13" width="1" height="4" fill="#111"/><rect x="645.29" y="13" width="1" height="4" fill="#111"/><rect x="648.54" y="4" width="1.2" height="13" fill="#111"/><rect x="651.79" y="13" width="1" height="4" fill="#111"/><rect x="655.04" y="13" width="1" height="4" fill="#111"/><rect x="658.28" y="13" width="1" height="4" fill="#111"/><rect x="661.53" y="13" width="1" height="4" fill="#111"/><rect x="664.78" y="13" width="1" height="4" fill="#111"/><rect x="668.03" y="13" width="1" height="4" fill="#111"/><rect x="671.28" y="13" width="1" height="4" fill="#111"/><rect x="674.52" y="13" width="1" height="4" fill="#111"/><rect x="677.77" y="13" width="1" height="4" fill="#111"/><rect x="681.02" y="4" width="1.2" height="13" fill="#111"/><rect x="684.27" y="13" width="1" height="4" fill="#111"/><rect x="687.52" y="13" width="1" height="4" fill="#111"/><rect x="690.76" y="13" width="1" height="4" fill="#111"/><rect x="694.01" y="13" width="1" height="4" fill="#111"/><rect x="697.26" y="13" width="1" height="4" fill="#111"/><rect x="700.51" y="13" width="1" height="4" fill="#111"/><rect x="703.76" y="13" width="1" height="4" fill="#111"/><rect x="707.00" y="13" width="1" height="4" fill="#111"/><rect x="710.25" y="13" width="1" height="4" fill="#111"/><rect x="713.50" y="4" width="1.2" height="13" fill="#111"/><rect x="716.75" y="13" width="1" height="4" fill="#111"/><rect x="720.00" y="13" width="1" height="4" fill="#111"/><rect x="723.24" y="13" width="1" height="4" fill="#111"/><rect x="726.49" y="13" width="1" height="4" fill="#111"/><rect x="729.74" y="13" width="1" height="4" fill="#111"/><rect x="732.99" y="13" width="1" height="4" fill="#111"/><rect x="736.24" y="13" width="1" height="4" fill="#111"/><rect x="739.48" y="13" width="1" height="4" fill="#111"/><rect x="742.73" y="13" width="1" height="4" fill="#111"/><rect x="745.98" y="4" width="1.2" height="13" fill="#111"/><rect x="749.23" y="13" width="1" height="4" fill="#111"/><rect x="752.48" y="13" width="1" height="4" fill="#111"/><rect x="755.72" y="13" width="1" height="4" fill="#111"/><rect x="758.97" y="13" width="1" height="4" fill="#111"/><rect x="762.22" y="13" width="1" height="4" fill="#111"/><rect x="765.47" y="13" width="1" height="4" fill="#111"/><rect x="768.72" y="13" width="1" height="4" fill="#111"/><rect x="771.96" y="13" width="1" height="4" fill="#111"/><rect x="775.21" y="13" width="1" height="4" fill="#111"/><rect x="778.46" y="4" width="1.2" height="13" fill="#111"/><rect x="781.71" y="13" width="1" height="4" fill="#111"/><rect x="784.96" y="13" width="1" height="4" fill="#111"/><rect x="788.20" y="13" width="1" height="4" fill="#111"/><rect x="791.45" y="13" width="1" height="4" fill="#111"/><rect x="794.70" y="13" width="1" height="4" fill="#111"/><rect x="797.95" y="13" width="1" height="4" fill="#111"/><rect x="801.20" y="13" width="1" height="4" fill="#111"/><rect x="804.44" y="13" width="1" height="4" fill="#111"/><rect x="807.69" y="13" width="1" height="4" fill="#111"/><rect x="810.94" y="4" width="1.2" height="13" fill="#111"/><rect x="814.19" y="13" width="1" height="4" fill="#111"/><rect x="817.44" y="13" width="1" height="4" fill="#111"/><rect x="820.68" y="13" width="1" height="4" fill="#111"/><rect x="823.93" y="13" width="1" height="4" fill="#111"/><rect x="827.18" y="13" width="1" height="4" fill="#111"/><rect x="830.43" y="13" width="1" height="4" fill="#111"/><rect x="833.68" y="13" width="1" height="4" fill="#111"/><rect x="836.92" y="13" width="1" height="4" fill="#111"/><rect x="840.17" y="13" width="1" height="4" fill="#111"/><rect x="843.42" y="4" width="1.2" height="13" fill="#111"/><rect x="846.67" y="13" width="1" height="4" fill="#111"/><rect x="849.92" y="13" width="1" height="4" fill="#111"/><rect x="853.16" y="13" width="1" height="4" fill="#111"/><rect x="856.41" y="13" width="1" height="4" fill="#111"/><rect x="859.66" y="13" width="1" height="4" fill="#111"/><rect x="862.91" y="13" width="1" height="4" fill="#111"/><rect x="866.16" y="13" width="1" height="4" fill="#111"/><rect x="869.40" y="13" width="1" height="4" fill="#111"/><rect x="872.65" y="13" width="1" height="4" fill="#111"/><rect x="875.90" y="4" width="1.2" height="13" fill="#111"/><rect x="879.15" y="13" width="1" height="4" fill="#111"/><rect x="882.40" y="13" width="1" height="4" fill="#111"/><rect x="885.64" y="13" width="1" height="4" fill="#111"/><rect x="888.89" y="13" width="1" height="4" fill="#111"/><rect x="892.14" y="13" width="1" height="4" fill="#111"/><rect x="895.39" y="13" width="1" height="4" fill="#111"/><rect x="898.64" y="13" width="1" height="4" fill="#111"/><rect x="901.88" y="13" width="1" height="4" fill="#111"/><rect x="905.13" y="13" width="1" height="4" fill="#111"/><rect x="908.38" y="4" width="1.2" height="13" fill="#111"/><rect x="911.63" y="13" width="1" height="4" fill="#111"/><rect x="914.88" y="13" width="1" height="4" fill="#111"/><rect x="918.12" y="13" width="1" height="4" fill="#111"/><rect x="921.37" y="13" width="1" height="4" fill="#111"/><rect x="924.62" y="13" width="1" height="4" fill="#111"/><rect x="927.87" y="13" width="1" height="4" fill="#111"/><rect x="931.12" y="13" width="1" height="4" fill="#111"/><rect x="934.36" y="13" width="1" height="4" fill="#111"/><rect x="937.61" y="13" width="1" height="4" fill="#111"/><rect x="940.86" y="4" width="1.2" height="13" fill="#111"/><rect x="944.11" y="13" width="1" height="4" fill="#111"/><rect x="947.36" y="13" width="1" height="4" fill="#111"/><rect x="950.60" y="13" width="1" height="4" fill="#111"/><rect x="953.85" y="13" width="1" height="4" fill="#111"/><rect x="957.10" y="13" width="1" height="4" fill="#111"/><rect x="960.35" y="13" width="1" height="4" fill="#111"/><rect x="963.60" y="13" width="1" height="4" fill="#111"/><rect x="966.84" y="13" width="1" height="4" fill="#111"/><rect x="970.09" y="13" width="1" height="4" fill="#111"/><rect x="973.34" y="4" width="1.2" height="13" fill="#111"/><rect x="976.59" y="13" width="1" height="4" fill="#111"/><rect x="979.84" y="13" width="1" height="4" fill="#111"/><rect x="983.08" y="13" width="1" height="4" fill="#111"/><rect x="986.33" y="13" width="1" height="4" fill="#111"/><rect x="989.58" y="13" width="1" height="4" fill="#111"/><rect x="992.83" y="13" width="1" height="4" fill="#111"/><rect x="996.08" y="13" width="1" height="4" fill="#111"/><rect x="999.32" y="13" width="1" height="4" fill="#111"/><rect x="1002.57" y="13" width="1" height="4" fill="#111"/><rect x="1005.82" y="4" width="1.2" height="13" fill="#111"/><rect x="1009.07" y="13" width="1" height="4" fill="#111"/><rect x="1012.32" y="13" width="1" height="4" fill="#111"/><rect x="1015.56" y="13" width="1" height="4" fill="#111"/><rect x="1018.81" y="13" width="1" height="4" fill="#111"/><rect x="1022.06" y="13" width="1" height="4" fill="#111"/><rect x="1025.31" y="13" width="1" height="4" fill="#111"/><rect x="1028.56" y="13" width="1" height="4" fill="#111"/><rect x="1031.80" y="13" width="1" height="4" fill="#111"/><rect x="1035.05" y="13" width="1" height="4" fill="#111"/><rect x="1038.30" y="4" width="1.2" height="13" fill="#111"/><rect x="1041.55" y="13" width="1" height="4" fill="#111"/><rect x="1044.80" y="13" width="1" height="4" fill="#111"/><rect x="1048.04" y="13" width="1" height="4" fill="#111"/><rect x="1051.29" y="13" width="1" height="4" fill="#111"/><rect x="1054.54" y="13" width="1" height="4" fill="#111"/><rect x="1057.79" y="13" width="1" height="4" fill="#111"/><rect x="1061.04" y="13" width="1" height="4" fill="#111"/><rect x="1064.28" y="13" width="1" height="4" fill="#111"/><rect x="1067.53" y="13" width="1" height="4" fill="#111"/><rect x="1070.78" y="4" width="1.2" height="13" fill="#111"/><rect x="1074.03" y="13" width="1" height="4" fill="#111"/><rect x="1077.28" y="13" width="1" height="4" fill="#111"/><rect x="1080.52" y="13" width="1" height="4" fill="#111"/><rect x="1083.77" y="13" width="1" height="4" fill="#111"/><rect x="1087.02" y="13" width="1" height="4" fill="#111"/><rect x="1090.27" y="13" width="1" height="4" fill="#111"/><rect x="1093.52" y="13" width="1" height="4" fill="#111"/></svg>
<div class="a" style="left:284px;top:168px;width:5px;height:1px;background:#111"></div>
<div class="t" style="left:289px;top:164px;font-size:10px;color:#111;font-family:'Liberation Sans',sans-serif;letter-spacing:-0.3px">160</div>
<div class="a" style="left:316px;top:168px;width:5px;height:1px;background:#111"></div>
<div class="t" style="left:321px;top:164px;font-size:10px;color:#111;font-family:'Liberation Sans',sans-serif;letter-spacing:-0.3px">150</div>
<div class="a" style="left:349px;top:168px;width:5px;height:1px;background:#111"></div>
<div class="t" style="left:354px;top:164px;font-size:10px;color:#111;font-family:'Liberation Sans',sans-serif;letter-spacing:-0.3px">140</div>
<div class="a" style="left:381px;top:168px;width:5px;height:1px;background:#111"></div>
<div class="t" style="left:386px;top:164px;font-size:10px;color:#111;font-family:'Liberation Sans',sans-serif;letter-spacing:-0.3px">130</div>
<div class="a" style="left:414px;top:168px;width:5px;height:1px;background:#111"></div>
<div class="t" style="left:419px;top:164px;font-size:10px;color:#111;font-family:'Liberation Sans',sans-serif;letter-spacing:-0.3px">120</div>
<div class="a" style="left:446px;top:168px;width:5px;height:1px;background:#111"></div>
<div class="t" style="left:451px;top:164px;font-size:10px;color:#111;font-family:'Liberation Sans',sans-serif;letter-spacing:-0.3px">110</div>
<div class="a" style="left:479px;top:168px;width:5px;height:1px;background:#111"></div>
<div class="t" style="left:484px;top:164px;font-size:10px;color:#111;font-family:'Liberation Sans',sans-serif;letter-spacing:-0.3px">100</div>
<div class="a" style="left:511px;top:168px;width:5px;height:1px;background:#111"></div>
<div class="t" style="left:516px;top:164px;font-size:10px;color:#111;font-family:'Liberation Sans',sans-serif;letter-spacing:-0.3px">90</div>
<div class="a" style="left:544px;top:168px;width:5px;height:1px;background:#111"></div>
<div class="t" style="left:549px;top:164px;font-size:10px;color:#111;font-family:'Liberation Sans',sans-serif;letter-spacing:-0.3px">80</div>
<div class="a" style="left:576px;top:168px;width:5px;height:1px;background:#111"></div>
<div class="t" style="left:581px;top:164px;font-size:10px;color:#111;font-family:'Liberation Sans',sans-serif;letter-spacing:-0.3px">70</div>
<div class="a" style="left:609px;top:168px;width:5px;height:1px;background:#111"></div>
<div class="t" style="left:614px;top:164px;font-size:10px;color:#111;font-family:'Liberation Sans',sans-serif;letter-spacing:-0.3px">60</div>
<div class="a" style="left:641px;top:168px;width:5px;height:1px;background:#111"></div>
<div class="t" style="left:646px;top:164px;font-size:10px;color:#111;font-family:'Liberation Sans',sans-serif;letter-spacing:-0.3px">50</div>
<div class="a" style="left:674px;top:168px;width:5px;height:1px;background:#111"></div>
<div class="t" style="left:679px;top:164px;font-size:10px;color:#111;font-family:'Liberation Sans',sans-serif;letter-spacing:-0.3px">40</div>
<div class="a" style="left:706px;top:168px;width:5px;height:1px;background:#111"></div>
<div class="t" style="left:711px;top:164px;font-size:10px;color:#111;font-family:'Liberation Sans',sans-serif;letter-spacing:-0.3px">30</div>
<div class="a" style="left:739px;top:168px;width:5px;height:1px;background:#111"></div>
<div class="t" style="left:744px;top:164px;font-size:10px;color:#111;font-family:'Liberation Sans',sans-serif;letter-spacing:-0.3px">20</div>
<div class="a" style="left:771px;top:168px;width:5px;height:1px;background:#111"></div>
<div class="t" style="left:776px;top:164px;font-size:10px;color:#111;font-family:'Liberation Sans',sans-serif;letter-spacing:-0.3px">10</div>
<div class="t" style="left:804px;top:164px;font-size:10px;color:#111;letter-spacing:-0.3px">0</div>
<div class="t" style="left:836px;top:164px;font-size:10px;color:#111;letter-spacing:-0.3px">10</div>
<div class="t" style="left:869px;top:164px;font-size:10px;color:#111;letter-spacing:-0.3px">20</div>
<div class="t" style="left:901px;top:164px;font-size:10px;color:#111;letter-spacing:-0.3px">30</div>
<div class="t" style="left:934px;top:164px;font-size:10px;color:#111;letter-spacing:-0.3px">40</div>
<div class="t" style="left:966px;top:164px;font-size:10px;color:#111;letter-spacing:-0.3px">50</div>
<div class="t" style="left:998px;top:164px;font-size:10px;color:#111;letter-spacing:-0.3px">60</div>
<div class="t" style="left:1031px;top:164px;font-size:10px;color:#111;letter-spacing:-0.3px">70</div>
<div class="t" style="left:1063px;top:164px;font-size:10px;color:#111;letter-spacing:-0.3px">80</div>
<div class="t" style="left:1096px;top:164px;font-size:10px;color:#111;letter-spacing:-0.3px">90</div>
<div class="t" style="left:1128px;top:164px;font-size:10px;color:#111;letter-spacing:-0.3px">100</div>
<div class="t" style="left:1161px;top:164px;font-size:10px;color:#111;letter-spacing:-0.3px">110</div>
<div class="t" style="left:1193px;top:164px;font-size:10px;color:#111;letter-spacing:-0.3px">120</div>
<div class="t" style="left:1226px;top:164px;font-size:10px;color:#111;letter-spacing:-0.3px">130</div>
<div class="t" style="left:1258px;top:164px;font-size:10px;color:#111;letter-spacing:-0.3px">140</div>
<div class="t" style="left:1291px;top:164px;font-size:10px;color:#111;letter-spacing:-0.3px">150</div>
<div class="t" style="left:1323px;top:164px;font-size:10px;color:#111;letter-spacing:-0.3px">160</div>
<div class="a" style="left:250px;top:162px;width:18px;height:17px;background:#fff"></div>
<svg class="a" style="left:250px;top:162px;" width="18" height="17" viewBox="0 0 18 17"><path d="M2 11.5H17" stroke="#333" stroke-width="1" stroke-dasharray="1 1.5"/><path d="M11.5 1V17" stroke="#333" stroke-width="1" stroke-dasharray="1 1.5"/><rect x="17" y="0" width="1" height="17" fill="#111"/></svg>
<svg class="a" style="left:663px;top:162px;" width="7" height="18" viewBox="0 0 7 18"><path d="M0 0H7L4 5V17H3V5Z" fill="#e02020"/></svg>
<div class="a" style="left:250px;top:180px;width:18px;height:390px;background:#fff"></div>
<div class="a" style="left:266px;top:180px;width:1.5px;height:390px;background:#111"></div>
<svg class="a" style="left:250px;top:180px;" width="18" height="390" viewBox="0 0 18 390"><rect x="13" y="1.25" width="4" height="1" fill="#111"/><rect x="13" y="4.50" width="4" height="1" fill="#111"/><rect x="13" y="7.75" width="4" height="1" fill="#111"/><rect x="13" y="11.00" width="4" height="1" fill="#111"/><rect x="13" y="14.25" width="4" height="1" fill="#111"/><rect x="13" y="17.50" width="4" height="1" fill="#111"/><rect x="13" y="20.75" width="4" height="1" fill="#111"/><rect x="13" y="24.00" width="4" height="1" fill="#111"/><rect x="13" y="27.25" width="4" height="1" fill="#111"/><rect x="7" y="30.50" width="10" height="1.2" fill="#111"/><rect x="13" y="33.75" width="4" height="1" fill="#111"/><rect x="13" y="37.00" width="4" height="1" fill="#111"/><rect x="13" y="40.25" width="4" height="1" fill="#111"/><rect x="13" y="43.50" width="4" height="1" fill="#111"/><rect x="13" y="46.75" width="4" height="1" fill="#111"/><rect x="13" y="50.00" width="4" height="1" fill="#111"/><rect x="13" y="53.25" width="4" height="1" fill="#111"/><rect x="13" y="56.50" width="4" height="1" fill="#111"/><rect x="13" y="59.75" width="4" height="1" fill="#111"/><rect x="7" y="63.00" width="10" height="1.2" fill="#111"/><rect x="13" y="66.25" width="4" height="1" fill="#111"/><rect x="13" y="69.50" width="4" height="1" fill="#111"/><rect x="13" y="72.75" width="4" height="1" fill="#111"/><rect x="13" y="76.00" width="4" height="1" fill="#111"/><rect x="13" y="79.25" width="4" height="1" fill="#111"/><rect x="13" y="82.50" width="4" height="1" fill="#111"/><rect x="13" y="85.75" width="4" height="1" fill="#111"/><rect x="13" y="89.00" width="4" height="1" fill="#111"/><rect x="13" y="92.25" width="4" height="1" fill="#111"/><rect x="7" y="95.50" width="10" height="1.2" fill="#111"/><rect x="13" y="98.75" width="4" height="1" fill="#111"/><rect x="13" y="102.00" width="4" height="1" fill="#111"/><rect x="13" y="105.25" width="4" height="1" fill="#111"/><rect x="13" y="108.50" width="4" height="1" fill="#111"/><rect x="13" y="111.75" width="4" height="1" fill="#111"/><rect x="13" y="115.00" width="4" height="1" fill="#111"/><rect x="13" y="118.25" width="4" height="1" fill="#111"/><rect x="13" y="121.50" width="4" height="1" fill="#111"/><rect x="13" y="124.75" width="4" height="1" fill="#111"/><rect x="7" y="128.00" width="10" height="1.2" fill="#111"/><rect x="13" y="131.25" width="4" height="1" fill="#111"/><rect x="13" y="134.50" width="4" height="1" fill="#111"/><rect x="13" y="137.75" width="4" height="1" fill="#111"/><rect x="13" y="141.00" width="4" height="1" fill="#111"/><rect x="13" y="144.25" width="4" height="1" fill="#111"/><rect x="13" y="147.50" width="4" height="1" fill="#111"/><rect x="13" y="150.75" width="4" height="1" fill="#111"/><rect x="13" y="154.00" width="4" height="1" fill="#111"/><rect x="13" y="157.25" width="4" height="1" fill="#111"/><rect x="7" y="160.50" width="10" height="1.2" fill="#111"/><rect x="13" y="163.75" width="4" height="1" fill="#111"/><rect x="13" y="167.00" width="4" height="1" fill="#111"/><rect x="13" y="170.25" width="4" height="1" fill="#111"/><rect x="13" y="173.50" width="4" height="1" fill="#111"/><rect x="13" y="176.75" width="4" height="1" fill="#111"/><rect x="13" y="180.00" width="4" height="1" fill="#111"/><rect x="13" y="183.25" width="4" height="1" fill="#111"/><rect x="13" y="186.50" width="4" height="1" fill="#111"/><rect x="13" y="189.75" width="4" height="1" fill="#111"/><rect x="7" y="193.00" width="10" height="1.2" fill="#111"/><rect x="13" y="196.25" width="4" height="1" fill="#111"/><rect x="13" y="199.50" width="4" height="1" fill="#111"/><rect x="13" y="202.75" width="4" height="1" fill="#111"/><rect x="13" y="206.00" width="4" height="1" fill="#111"/><rect x="13" y="209.25" width="4" height="1" fill="#111"/><rect x="13" y="212.50" width="4" height="1" fill="#111"/><rect x="13" y="215.75" width="4" height="1" fill="#111"/><rect x="13" y="219.00" width="4" height="1" fill="#111"/><rect x="13" y="222.25" width="4" height="1" fill="#111"/><rect x="7" y="225.50" width="10" height="1.2" fill="#111"/><rect x="13" y="228.75" width="4" height="1" fill="#111"/><rect x="13" y="232.00" width="4" height="1" fill="#111"/><rect x="13" y="235.25" width="4" height="1" fill="#111"/><rect x="13" y="238.50" width="4" height="1" fill="#111"/><rect x="13" y="241.75" width="4" height="1" fill="#111"/><rect x="13" y="245.00" width="4" height="1" fill="#111"/><rect x="13" y="248.25" width="4" height="1" fill="#111"/><rect x="13" y="251.50" width="4" height="1" fill="#111"/><rect x="13" y="254.75" width="4" height="1" fill="#111"/><rect x="7" y="258.00" width="10" height="1.2" fill="#111"/><rect x="13" y="261.25" width="4" height="1" fill="#111"/><rect x="13" y="264.50" width="4" height="1" fill="#111"/><rect x="13" y="267.75" width="4" height="1" fill="#111"/><rect x="13" y="271.00" width="4" height="1" fill="#111"/><rect x="13" y="274.25" width="4" height="1" fill="#111"/><rect x="13" y="277.50" width="4" height="1" fill="#111"/><rect x="13" y="280.75" width="4" height="1" fill="#111"/><rect x="13" y="284.00" width="4" height="1" fill="#111"/><rect x="13" y="287.25" width="4" height="1" fill="#111"/><rect x="7" y="290.50" width="10" height="1.2" fill="#111"/><rect x="13" y="293.75" width="4" height="1" fill="#111"/><rect x="13" y="297.00" width="4" height="1" fill="#111"/><rect x="13" y="300.25" width="4" height="1" fill="#111"/><rect x="13" y="303.50" width="4" height="1" fill="#111"/><rect x="13" y="306.75" width="4" height="1" fill="#111"/><rect x="13" y="310.00" width="4" height="1" fill="#111"/><rect x="13" y="313.25" width="4" height="1" fill="#111"/><rect x="13" y="316.50" width="4" height="1" fill="#111"/><rect x="13" y="319.75" width="4" height="1" fill="#111"/><rect x="7" y="323.00" width="10" height="1.2" fill="#111"/><rect x="13" y="326.25" width="4" height="1" fill="#111"/><rect x="13" y="329.50" width="4" height="1" fill="#111"/><rect x="13" y="332.75" width="4" height="1" fill="#111"/><rect x="13" y="336.00" width="4" height="1" fill="#111"/><rect x="13" y="339.25" width="4" height="1" fill="#111"/><rect x="13" y="342.50" width="4" height="1" fill="#111"/><rect x="13" y="345.75" width="4" height="1" fill="#111"/><rect x="13" y="349.00" width="4" height="1" fill="#111"/><rect x="13" y="352.25" width="4" height="1" fill="#111"/><rect x="7" y="355.50" width="10" height="1.2" fill="#111"/><rect x="13" y="358.75" width="4" height="1" fill="#111"/><rect x="13" y="362.00" width="4" height="1" fill="#111"/><rect x="13" y="365.25" width="4" height="1" fill="#111"/><rect x="13" y="368.50" width="4" height="1" fill="#111"/><rect x="13" y="371.75" width="4" height="1" fill="#111"/><rect x="13" y="375.00" width="4" height="1" fill="#111"/><rect x="13" y="378.25" width="4" height="1" fill="#111"/><rect x="13" y="381.50" width="4" height="1" fill="#111"/><rect x="13" y="384.75" width="4" height="1" fill="#111"/><rect x="7" y="388.00" width="10" height="1.2" fill="#111"/></svg>
<div class="t" style="left:252px;top:213px;width:10px;height:20px;font-size:10px;color:#111"><div style="position:absolute;left:0;top:0;transform:translate(0px,12.2px) rotate(-90deg);transform-origin:0 0;letter-spacing:-0.3px">20</div></div>
<div class="t" style="left:252px;top:246px;width:10px;height:20px;font-size:10px;color:#111"><div style="position:absolute;left:0;top:0;transform:translate(0px,12.2px) rotate(-90deg);transform-origin:0 0;letter-spacing:-0.3px">30</div></div>
<div class="t" style="left:252px;top:278px;width:10px;height:20px;font-size:10px;color:#111"><div style="position:absolute;left:0;top:0;transform:translate(0px,12.2px) rotate(-90deg);transform-origin:0 0;letter-spacing:-0.3px">40</div></div>
<div class="t" style="left:252px;top:310px;width:10px;height:20px;font-size:10px;color:#111"><div style="position:absolute;left:0;top:0;transform:translate(0px,12.2px) rotate(-90deg);transform-origin:0 0;letter-spacing:-0.3px">50</div></div>
<div class="t" style="left:252px;top:343px;width:10px;height:20px;font-size:10px;color:#111"><div style="position:absolute;left:0;top:0;transform:translate(0px,12.2px) rotate(-90deg);transform-origin:0 0;letter-spacing:-0.3px">60</div></div>
<div class="t" style="left:252px;top:376px;width:10px;height:20px;font-size:10px;color:#111"><div style="position:absolute;left:0;top:0;transform:translate(0px,12.2px) rotate(-90deg);transform-origin:0 0;letter-spacing:-0.3px">70</div></div>
<div class="t" style="left:252px;top:408px;width:10px;height:20px;font-size:10px;color:#111"><div style="position:absolute;left:0;top:0;transform:translate(0px,12.2px) rotate(-90deg);transform-origin:0 0;letter-spacing:-0.3px">80</div></div>
<div class="t" style="left:252px;top:440px;width:10px;height:20px;font-size:10px;color:#111"><div style="position:absolute;left:0;top:0;transform:translate(0px,12.2px) rotate(-90deg);transform-origin:0 0;letter-spacing:-0.3px">90</div></div>
<div class="t" style="left:252px;top:473px;width:10px;height:20px;font-size:10px;color:#111"><div style="position:absolute;left:0;top:0;transform:translate(0px,17.8px) rotate(-90deg);transform-origin:0 0;letter-spacing:-0.3px">100</div></div>
<div class="t" style="left:252px;top:506px;width:10px;height:20px;font-size:10px;color:#111"><div style="position:absolute;left:0;top:0;transform:translate(0px,17.8px) rotate(-90deg);transform-origin:0 0;letter-spacing:-0.3px">110</div></div>
<div class="t" style="left:252px;top:538px;width:10px;height:20px;font-size:10px;color:#111"><div style="position:absolute;left:0;top:0;transform:translate(0px,17.8px) rotate(-90deg);transform-origin:0 0;letter-spacing:-0.3px">120</div></div>
<svg class="a" style="left:250px;top:564px;" width="18" height="6" viewBox="0 0 18 6"><rect x="0" y="4" width="18" height="1.5" fill="#111"/><path d="M0.5 1L6 4.5L0.5 5.5Z" fill="#e02020"/><rect x="0" y="4.5" width="8" height="1.5" fill="#c01818"/></svg>
<div class="a" style="left:268px;top:180px;width:1080px;height:390px;background:#8d95aa"></div>
<div class="a" style="left:337px;top:180px;width:930px;height:390px;background:#fff"></div>
<div class="a" style="left:346px;top:180px;width:1px;height:390px;background:#8a8a8a"></div>
<div class="a" style="left:1256px;top:180px;width:1px;height:390px;background:#8a8a8a"></div>
<div class="a" style="left:1266px;top:180px;width:2px;height:390px;background:#c84444"></div>
<div class="a" style="left:1268px;top:180px;width:4px;height:390px;background:#7d7f86"></div>
<div class="a" style="left:801px;top:180px;width:1px;height:390px;background:#c83838"></div>
<svg class="a" style="left:411px;top:211px" width="326" height="359"><path d="M0.5 359V0.5H325.5V359" fill="none" stroke="#7a7a7a" stroke-width="1" stroke-dasharray="1 2"/></svg>
<svg class="a" style="left:866px;top:211px" width="326" height="359"><path d="M0.5 359V0.5H325.5V359" fill="none" stroke="#7a7a7a" stroke-width="1" stroke-dasharray="1 2"/></svg>
<div class="a" style="left:411px;top:202px;width:54px;height:9px;background:#fff"></div>
<div class="t" style="left:410px;top:203px;font-size:11px;color:#222;font-family:'Liberation Serif',serif">寻味老北京</div>
<div class="t" style="left:551px;top:293px;font-size:15px;color:#222;font-weight:500">浪淘沙</div>
<div class="t" style="left:552px;top:318px;font-size:11.5px;color:#555;font-family:'Liberation Serif',serif">[商]李煜</div>
<div class="t" style="left:543px;top:356px;font-size:12px;color:#333;font-family:'Liberation Serif',serif">往事只堪哀，</div>
<div class="t" style="left:543px;top:377px;font-size:12px;color:#333;font-family:'Liberation Serif',serif">对景难排。</div>
<div class="t" style="left:543px;top:398px;font-size:12px;color:#333;font-family:'Liberation Serif',serif">秋风庭院藓侵阶。</div>
<div class="t" style="left:543px;top:439px;font-size:12px;color:#333;font-family:'Liberation Serif',serif">一任珠帘闲不卷，</div>
<div class="t" style="left:543px;top:460px;font-size:12px;color:#333;font-family:'Liberation Serif',serif">终日谁来！</div>
<div class="t" style="left:543px;top:501px;font-size:12px;color:#333;font-family:'Liberation Serif',serif">金锁已沉埋，</div>
<div class="t" style="left:543px;top:522px;font-size:12px;color:#333;font-family:'Liberation Serif',serif">壮气蒿莱。</div>
<div class="t" style="left:543px;top:543px;font-size:12px;color:#333;font-family:'Liberation Serif',serif">晚凉天净月华开。</div>
<div class="t" style="left:1006px;top:293px;font-size:15px;color:#222;font-weight:500">浪淘沙</div>
<div class="t" style="left:1007px;top:318px;font-size:11.5px;color:#555;font-family:'Liberation Serif',serif">[商]李煜</div>
<div class="t" style="left:998px;top:356px;font-size:12px;color:#333;font-family:'Liberation Serif',serif">往事只堪哀，</div>
<div class="t" style="left:998px;top:377px;font-size:12px;color:#333;font-family:'Liberation Serif',serif">对景难排。</div>
<div class="t" style="left:998px;top:398px;font-size:12px;color:#333;font-family:'Liberation Serif',serif">秋风庭院藓侵阶。</div>
<div class="t" style="left:998px;top:439px;font-size:12px;color:#333;font-family:'Liberation Serif',serif">一任珠帘闲不卷，</div>
<div class="t" style="left:998px;top:460px;font-size:12px;color:#333;font-family:'Liberation Serif',serif">终日谁来！</div>
<div class="t" style="left:998px;top:501px;font-size:12px;color:#333;font-family:'Liberation Serif',serif">金锁已沉埋，</div>
<div class="t" style="left:998px;top:522px;font-size:12px;color:#333;font-family:'Liberation Serif',serif">壮气蒿莱。</div>
<div class="t" style="left:998px;top:543px;font-size:12px;color:#333;font-family:'Liberation Serif',serif">晚凉天净月华开。</div>
<div class="a" style="left:1348px;top:162px;width:17px;height:408px;background:#f0f0f0;border-left:1px solid #e0e0e0"></div>
<svg class="a" style="left:1351px;top:168px;" width="11" height="7" viewBox="0 0 11 7"><path d="M0.5 6.5L5.5 1L10.5 6.5Z" fill="#606060"/></svg>
<div class="a" style="left:1350px;top:200px;width:13px;height:18px;background:linear-gradient(90deg,#f8f8f8,#dedede);border:1px solid #a8a8a8;border-radius:3px"></div>
<svg class="a" style="left:1353px;top:205px;" width="8" height="7" viewBox="0 0 8 7"><path d="M0 0.5H8M0 3H8M0 5.5H8" stroke="#777" stroke-width="0.8"/></svg>
<svg class="a" style="left:1351px;top:557px;" width="11" height="7" viewBox="0 0 11 7"><path d="M0.5 0.5L5.5 6L10.5 0.5Z" fill="#606060"/></svg>
<div class="a" style="left:250px;top:570px;width:1098px;height:17px;background:#efefef"></div>
<div class="a" style="left:252px;top:572px;width:15px;height:14px;background:linear-gradient(#fafafa,#dcdcdc);border:1px solid #a8a8a8;border-radius:2px"></div>
<svg class="a" style="left:256px;top:574px;" width="7" height="10" viewBox="0 0 7 10"><path d="M6.5 0.5L0.5 5L6.5 9.5Z" fill="#555"/></svg>
<div class="a" style="left:362px;top:571px;width:886px;height:15px;background:linear-gradient(#dff1fd 0%,#b9def7 45%,#9fd0f2 55%,#b2dbf6 100%);border:1px solid #3d7fb0;border-radius:2px"></div>
<svg class="a" style="left:800px;top:574px;" width="8" height="9" viewBox="0 0 8 9"><path d="M0.5 0V9M2.5 0V9M4.5 0V9M6.5 0V9" stroke="#4a7ea8" stroke-width="0.9"/></svg>
<div class="a" style="left:1348px;top:570px;width:17px;height:17px;background:#8d95aa"></div>
<div class="a" style="left:250px;top:586px;width:1115px;height:1px;background:#8f98a4"></div>
<div class="a" style="left:250px;top:587px;width:1115px;height:8px;background:linear-gradient(#e4ecf6,#d6e1ef)"></div>
<svg class="a" style="left:804px;top:588px;" width="7" height="4" viewBox="0 0 7 4"><path d="M0 0H7L3.5 4Z" fill="#555"/></svg>
<div class="a" style="left:251px;top:595px;width:1114px;height:1px;background:#a7b0bc"></div>
<div class="a" style="left:250px;top:596px;width:1115px;height:86px;background:#fff"></div>
<div class="a" style="left:250px;top:596px;width:35px;height:86px;background:#f0f0f0"></div>
<div class="a" style="left:251px;top:596px;width:34px;height:53px;background:#fff;border:1px solid #c8c8c8;border-right:none;border-top:none"></div>
<div class="a" style="left:284px;top:649px;width:1px;height:33px;background:#c8c8c8"></div>
<svg class="a" style="left:256px;top:599px;" width="22" height="27" viewBox="0 0 22 27"><path d="M0.5 0.5H15L21.5 7V26.5H0.5Z" fill="#f4f7fc" stroke="#6b7b9a"/><path d="M15 0.5V7H21.5" fill="#e8eef8" stroke="#6b7b9a"/><rect x="3.5" y="8.5" width="8" height="0.9" fill="#7a90b8"/><rect x="3.5" y="11.0" width="15" height="0.9" fill="#6d8cc4"/><rect x="3.5" y="13.4" width="15" height="0.9" fill="#6d8cc4"/><rect x="3.5" y="15.8" width="15" height="0.9" fill="#6d8cc4"/><rect x="3.5" y="18.2" width="15" height="0.9" fill="#6d8cc4"/><rect x="3.5" y="20.6" width="15" height="0.9" fill="#6d8cc4"/><rect x="3.5" y="23.0" width="15" height="0.9" fill="#6d8cc4"/></svg>
<div class="t" style="left:254px;top:629px;font-size:13px;color:#d06a10;">页面</div>
<svg class="a" style="left:256px;top:650px;" width="22" height="28" viewBox="0 0 22 28"><path d="M0.5 0.5H15L21.5 7V27.5H0.5Z" fill="#fff" stroke="#666"/><path d="M15 0.5V7H21.5" fill="#eee" stroke="#666"/><rect x="3.5" y="4.5" width="8" height="4" fill="#e4e4e4" stroke="#777" stroke-width="0.9"/><rect x="3.5" y="11" width="15" height="0.9" fill="#777"/><rect x="3.5" y="13.5" width="15" height="0.9" fill="#777"/><rect x="3.5" y="16" width="15" height="0.9" fill="#777"/><rect x="3.5" y="19.5" width="15" height="4.5" fill="#e4e4e4" stroke="#777" stroke-width="0.9"/></svg>
<div class="a" style="left:295px;top:606px;width:77px;height:54px;background:#d6c99e;border:1px solid #9a9280"></div>
<div class="a" style="left:300px;top:611px;width:28px;height:45px;border:1px solid #7a6e4a"></div>
<div class="a" style="left:307px;top:631px;width:14px;height:1px;background:#8a7e5a"></div>
<div class="a" style="left:297px;top:657px;width:2px;height:2px;background:#555"></div>
<div class="a" style="left:381px;top:606px;width:73px;height:54px;background:#fff;border:1px solid #a0a0a0"></div>
<div class="a" style="left:417px;top:606px;width:1px;height:54px;background:#a0a0a0"></div>
<div class="a" style="left:463px;top:606px;width:73px;height:54px;background:#fff;border:1px solid #a0a0a0"></div>
<div class="a" style="left:499px;top:606px;width:1px;height:54px;background:#a0a0a0"></div>
<div class="a" style="left:545px;top:606px;width:73px;height:54px;background:#fff;border:1px solid #a0a0a0"></div>
<div class="a" style="left:581px;top:606px;width:1px;height:54px;background:#a0a0a0"></div>
<div class="a" style="left:627px;top:606px;width:73px;height:54px;background:#fff;border:1px solid #a0a0a0"></div>
<div class="a" style="left:663px;top:606px;width:1px;height:54px;background:#a0a0a0"></div>
<div class="a" style="left:709px;top:606px;width:73px;height:54px;background:#fff;border:1px solid #a0a0a0"></div>
<div class="a" style="left:745px;top:606px;width:1px;height:54px;background:#a0a0a0"></div>
<div class="a" style="left:791px;top:606px;width:73px;height:54px;background:#fff;border:1px solid #a0a0a0"></div>
<div class="a" style="left:827px;top:606px;width:1px;height:54px;background:#a0a0a0"></div>
<div class="a" style="left:873px;top:606px;width:73px;height:54px;background:#fff;border:1px solid #a0a0a0"></div>
<div class="a" style="left:909px;top:606px;width:1px;height:54px;background:#a0a0a0"></div>
<div class="a" style="left:955px;top:606px;width:73px;height:54px;background:#fff;border:1px solid #a0a0a0"></div>
<div class="a" style="left:991px;top:606px;width:1px;height:54px;background:#a0a0a0"></div>
<div class="a" style="left:1037px;top:606px;width:73px;height:54px;background:#fff;border:1px solid #a0a0a0"></div>
<div class="a" style="left:1073px;top:606px;width:1px;height:54px;background:#a0a0a0"></div>
<div class="a" style="left:1119px;top:606px;width:73px;height:54px;background:#fff;border:1px solid #a0a0a0"></div>
<div class="a" style="left:1155px;top:606px;width:1px;height:54px;background:#a0a0a0"></div>
<div class="a" style="left:1201px;top:606px;width:73px;height:54px;background:#fff;border:1px solid #a0a0a0"></div>
<div class="a" style="left:1237px;top:606px;width:1px;height:54px;background:#a0a0a0"></div>
<div class="a" style="left:1283px;top:606px;width:73px;height:54px;background:#fff;border:1px solid #a0a0a0"></div>
<div class="a" style="left:1319px;top:606px;width:1px;height:54px;background:#a0a0a0"></div>
<svg class="a" style="left:417px;top:606px" width="37" height="54"><path d="M7 18Q14 12 22 9Q30 5 36 2M14 13L12 8M22 9L24 4M28 6L33 8M18 11L20 15" stroke="#c07080" stroke-width="0.6" fill="none"/><circle cx="10" cy="16" r="0.9" fill="#e06080"/><circle cx="15" cy="13" r="0.9" fill="#e06080"/><circle cx="20" cy="10" r="0.9" fill="#e06080"/><circle cx="25" cy="7" r="0.9" fill="#e06080"/><circle cx="30" cy="5" r="0.9" fill="#e06080"/><circle cx="34" cy="3" r="0.9" fill="#e06080"/><circle cx="23" cy="12" r="0.9" fill="#e06080"/><circle cx="17" cy="17" r="0.9" fill="#e06080"/><rect x="21.0" y="23" width="2.5" height="2.5" fill="#808080"/><rect x="21.0" y="27" width="2.5" height="2.5" fill="#808080"/><rect x="21.0" y="31" width="2.5" height="2.5" fill="#808080"/><rect x="25.2" y="23" width="2.5" height="2.5" fill="#808080"/><rect x="25.2" y="27" width="2.5" height="2.5" fill="#808080"/><rect x="25.2" y="31" width="2.5" height="2.5" fill="#808080"/><rect x="29.4" y="23" width="2.5" height="2.5" fill="#808080"/><rect x="19" y="22" width="0.8" height="8" fill="#bdbdbd"/><path d="M10 50H20" stroke="#bdbdbd" stroke-width="0.9" stroke-dasharray="1.2 0.5"/></svg>
<svg class="a" style="left:463px;top:606px" width="37" height="54"><path d="M4 5H16" stroke="#adadad" stroke-width="0.9" stroke-dasharray="1.2 0.5"/><path d="M4 7H24" stroke="#d2d2d2" stroke-width="0.9" stroke-dasharray="1.2 0.5"/><path d="M4 9H22" stroke="#d2d2d2" stroke-width="0.9" stroke-dasharray="1.2 0.5"/><path d="M4 11H24" stroke="#d2d2d2" stroke-width="0.9" stroke-dasharray="1.2 0.5"/><path d="M4 23H28" stroke="#a0a0a0" stroke-width="1.1" stroke-dasharray="30 0"/><path d="M4 25.0H28" stroke="#d2d2d2" stroke-width="0.9" stroke-dasharray="1.2 0.5"/><path d="M4 27.2H22" stroke="#d2d2d2" stroke-width="0.9" stroke-dasharray="1.2 0.5"/><path d="M4 29.4H22" stroke="#d2d2d2" stroke-width="0.9" stroke-dasharray="1.2 0.5"/><path d="M4 31.6H28" stroke="#d2d2d2" stroke-width="0.9" stroke-dasharray="1.2 0.5"/><path d="M4 33.8H22" stroke="#d2d2d2" stroke-width="0.9" stroke-dasharray="1.2 0.5"/><path d="M4 37H29" stroke="#adadad" stroke-width="1" stroke-dasharray="30 0"/><path d="M4 40H26" stroke="#d2d2d2" stroke-width="0.9" stroke-dasharray="1.2 0.5"/><path d="M4 42H22" stroke="#d2d2d2" stroke-width="0.9" stroke-dasharray="1.2 0.5"/></svg>
<svg class="a" style="left:500px;top:606px" width="37" height="54"><path d="M22 13H30" stroke="#c8c8c8" stroke-width="0.9" stroke-dasharray="1.2 0.5"/><path d="M4.0 25V39" stroke="#c8c8c8" stroke-width="2" stroke-dasharray="1.6 0.8"/><path d="M8.6 25V39" stroke="#c8c8c8" stroke-width="2" stroke-dasharray="1.6 0.8"/><path d="M13.2 25V39" stroke="#c8c8c8" stroke-width="2" stroke-dasharray="1.6 0.8"/><path d="M17.8 25V39" stroke="#c8c8c8" stroke-width="2" stroke-dasharray="1.6 0.8"/><path d="M22.4 25V39" stroke="#c8c8c8" stroke-width="2" stroke-dasharray="1.6 0.8"/><path d="M27.0 25V39" stroke="#c8c8c8" stroke-width="2" stroke-dasharray="1.6 0.8"/><path d="M3.5 42L5.5 44" stroke="#d2d2d2" stroke-width="0.8"/><path d="M8.1 42L10.1 44" stroke="#d2d2d2" stroke-width="0.8"/><path d="M12.7 42L14.7 44" stroke="#d2d2d2" stroke-width="0.8"/><path d="M17.3 42L19.3 44" stroke="#d2d2d2" stroke-width="0.8"/><path d="M21.9 42L23.9 44" stroke="#d2d2d2" stroke-width="0.8"/><path d="M26.5 42L28.5 44" stroke="#d2d2d2" stroke-width="0.8"/></svg>
<svg class="a" style="left:545px;top:606px" width="37" height="54"><circle cx="7" cy="6" r="2.8" fill="none" stroke="#adadad" stroke-width="0.6"/><path d="M5 8H11" stroke="#adadad" stroke-width="0.9" stroke-dasharray="1.2 0.5"/><path d="M4.0 25V39" stroke="#c8c8c8" stroke-width="2" stroke-dasharray="1.6 0.8"/><path d="M8.6 25V39" stroke="#c8c8c8" stroke-width="2" stroke-dasharray="1.6 0.8"/><path d="M13.2 25V39" stroke="#c8c8c8" stroke-width="2" stroke-dasharray="1.6 0.8"/><path d="M17.8 25V39" stroke="#c8c8c8" stroke-width="2" stroke-dasharray="1.6 0.8"/><path d="M22.4 25V39" stroke="#c8c8c8" stroke-width="2" stroke-dasharray="1.6 0.8"/><path d="M27.0 25V39" stroke="#c8c8c8" stroke-width="2" stroke-dasharray="1.6 0.8"/><path d="M3.5 42L5.5 44" stroke="#d2d2d2" stroke-width="0.8"/><path d="M8.1 42L10.1 44" stroke="#d2d2d2" stroke-width="0.8"/><path d="M12.7 42L14.7 44" stroke="#d2d2d2" stroke-width="0.8"/><path d="M17.3 42L19.3 44" stroke="#d2d2d2" stroke-width="0.8"/><path d="M21.9 42L23.9 44" stroke="#d2d2d2" stroke-width="0.8"/><path d="M26.5 42L28.5 44" stroke="#d2d2d2" stroke-width="0.8"/></svg>
<svg class="a" style="left:582px;top:606px" width="37" height="54"><path d="M28 7H32" stroke="#bdbdbd" stroke-width="0.9" stroke-dasharray="1.2 0.5"/><path d="M14 25H20" stroke="#adadad" stroke-width="1.2" stroke-dasharray="1.2 0.5"/><path d="M5 31.0H11" stroke="#c8c8c8" stroke-width="1" stroke-dasharray="1.2 0.5"/><path d="M5 33.4H13" stroke="#c8c8c8" stroke-width="1" stroke-dasharray="1.2 0.5"/><path d="M5 35.8H11" stroke="#c8c8c8" stroke-width="1" stroke-dasharray="1.2 0.5"/><path d="M5 38.2H13" stroke="#c8c8c8" stroke-width="1" stroke-dasharray="1.2 0.5"/><path d="M5 40.6H11" stroke="#c8c8c8" stroke-width="1" stroke-dasharray="1.2 0.5"/><path d="M5 43.0H13" stroke="#c8c8c8" stroke-width="1" stroke-dasharray="1.2 0.5"/><path d="M5 45.4H11" stroke="#c8c8c8" stroke-width="1" stroke-dasharray="1.2 0.5"/><path d="M5 47.8H13" stroke="#c8c8c8" stroke-width="1" stroke-dasharray="1.2 0.5"/><path d="M26 51H30" stroke="#bdbdbd" stroke-width="0.9" stroke-dasharray="1.2 0.5"/></svg>
<svg class="a" style="left:627px;top:606px" width="37" height="54"><circle cx="7" cy="6" r="2.8" fill="none" stroke="#adadad" stroke-width="0.6"/><path d="M5 8H12" stroke="#a0a0a0" stroke-width="0.9" stroke-dasharray="1.2 0.5"/><path d="M5 13.0H32" stroke="#c8c8c8" stroke-width="1" stroke-dasharray="1.2 0.5"/><path d="M5 15.6H32" stroke="#c8c8c8" stroke-width="1" stroke-dasharray="1.2 0.5"/><path d="M5 18.2H32" stroke="#c8c8c8" stroke-width="1" stroke-dasharray="1.2 0.5"/><path d="M5 20.8H32" stroke="#c8c8c8" stroke-width="1" stroke-dasharray="1.2 0.5"/><path d="M5 23.4H32" stroke="#c8c8c8" stroke-width="1" stroke-dasharray="1.2 0.5"/><path d="M5 26.0H32" stroke="#c8c8c8" stroke-width="1" stroke-dasharray="1.2 0.5"/><path d="M5 28.6H32" stroke="#c8c8c8" stroke-width="1" stroke-dasharray="1.2 0.5"/><path d="M5 31.2H32" stroke="#c8c8c8" stroke-width="1" stroke-dasharray="1.2 0.5"/><path d="M5 33.8H32" stroke="#c8c8c8" stroke-width="1" stroke-dasharray="1.2 0.5"/><path d="M5 36.400000000000006H32" stroke="#c8c8c8" stroke-width="1" stroke-dasharray="1.2 0.5"/><path d="M5 39.0H32" stroke="#c8c8c8" stroke-width="1" stroke-dasharray="1.2 0.5"/><path d="M5 41.6H32" stroke="#c8c8c8" stroke-width="1" stroke-dasharray="1.2 0.5"/><path d="M5 44.2H32" stroke="#c8c8c8" stroke-width="1" stroke-dasharray="1.2 0.5"/><path d="M5 46.800000000000004H32" stroke="#c8c8c8" stroke-width="1" stroke-dasharray="1.2 0.5"/><path d="M5 49.4H32" stroke="#c8c8c8" stroke-width="1" stroke-dasharray="1.2 0.5"/><path d="M6 51H10" stroke="#bdbdbd" stroke-width="0.9" stroke-dasharray="1.2 0.5"/></svg>
<svg class="a" style="left:664px;top:606px" width="37" height="54"><path d="M24 6H30" stroke="#bdbdbd" stroke-width="0.9" stroke-dasharray="1.2 0.5"/><path d="M5 11.0H32" stroke="#c8c8c8" stroke-width="1" stroke-dasharray="1.2 0.5"/><path d="M5 13.6H32" stroke="#c8c8c8" stroke-width="1" stroke-dasharray="1.2 0.5"/><path d="M5 16.2H32" stroke="#c8c8c8" stroke-width="1" stroke-dasharray="1.2 0.5"/><path d="M5 18.8H32" stroke="#c8c8c8" stroke-width="1" stroke-dasharray="1.2 0.5"/><path d="M5 21.4H32" stroke="#c8c8c8" stroke-width="1" stroke-dasharray="1.2 0.5"/><path d="M5 24.0H32" stroke="#c8c8c8" stroke-width="1" stroke-dasharray="1.2 0.5"/><path d="M5 26.6H32" stroke="#c8c8c8" stroke-width="1" stroke-dasharray="1.2 0.5"/><path d="M5 29.2H32" stroke="#c8c8c8" stroke-width="1" stroke-dasharray="1.2 0.5"/><path d="M5 31.8H32" stroke="#c8c8c8" stroke-width="1" stroke-dasharray="1.2 0.5"/><path d="M5 34.400000000000006H32" stroke="#c8c8c8" stroke-width="1" stroke-dasharray="1.2 0.5"/><path d="M5 37.0H32" stroke="#c8c8c8" stroke-width="1" stroke-dasharray="1.2 0.5"/><path d="M5 39.6H32" stroke="#c8c8c8" stroke-width="1" stroke-dasharray="1.2 0.5"/><path d="M5 42.2H32" stroke="#c8c8c8" stroke-width="1" stroke-dasharray="1.2 0.5"/><path d="M5 44.800000000000004H32" stroke="#c8c8c8" stroke-width="1" stroke-dasharray="1.2 0.5"/><path d="M5 47.4H32" stroke="#c8c8c8" stroke-width="1" stroke-dasharray="1.2 0.5"/><path d="M26 51H30" stroke="#bdbdbd" stroke-width="0.9" stroke-dasharray="1.2 0.5"/></svg>
<svg class="a" style="left:709px;top:606px" width="37" height="54"><path d="M5 5H12" stroke="#c8c8c8" stroke-width="0.9" stroke-dasharray="1.2 0.5"/><path d="M16 12H22" stroke="#adadad" stroke-width="1.2" stroke-dasharray="1.2 0.5"/><path d="M15 16.0H22" stroke="#c8c8c8" stroke-width="1" stroke-dasharray="1.2 0.5"/><path d="M15 18.6H20" stroke="#c8c8c8" stroke-width="1" stroke-dasharray="1.2 0.5"/><path d="M15 21.2H24" stroke="#c8c8c8" stroke-width="1" stroke-dasharray="1.2 0.5"/><path d="M15 23.8H21" stroke="#c8c8c8" stroke-width="1" stroke-dasharray="1.2 0.5"/><path d="M15 26.4H22" stroke="#c8c8c8" stroke-width="1" stroke-dasharray="1.2 0.5"/><path d="M15 29.0H20" stroke="#c8c8c8" stroke-width="1" stroke-dasharray="1.2 0.5"/><path d="M15 31.6H23" stroke="#c8c8c8" stroke-width="1" stroke-dasharray="1.2 0.5"/><path d="M15 34.2H21" stroke="#c8c8c8" stroke-width="1" stroke-dasharray="1.2 0.5"/><path d="M15 36.8H23" stroke="#c8c8c8" stroke-width="1" stroke-dasharray="1.2 0.5"/><path d="M15 39.400000000000006H21" stroke="#c8c8c8" stroke-width="1" stroke-dasharray="1.2 0.5"/><path d="M5 42.0H32" stroke="#d2d2d2" stroke-width="0.8" stroke-dasharray="1.2 0.5"/><path d="M5 43.8H32" stroke="#d2d2d2" stroke-width="0.8" stroke-dasharray="1.2 0.5"/><path d="M5 45.6H32" stroke="#d2d2d2" stroke-width="0.8" stroke-dasharray="1.2 0.5"/><path d="M5 47.4H32" stroke="#d2d2d2" stroke-width="0.8" stroke-dasharray="1.2 0.5"/><path d="M4 50H8" stroke="#999999" stroke-width="0.9" stroke-dasharray="1.2 0.5"/></svg>
<div class="a" style="left:743px;top:604px;width:41px;height:58px;background:#fff;border:3px solid #2e62b4;border-radius:3px"></div>
<svg class="a" style="left:745px;top:606px" width="37" height="54"><path d="M16 12H22" stroke="#adadad" stroke-width="1.2" stroke-dasharray="1.2 0.5"/><path d="M15 16.0H22" stroke="#c8c8c8" stroke-width="1" stroke-dasharray="1.2 0.5"/><path d="M15 18.6H20" stroke="#c8c8c8" stroke-width="1" stroke-dasharray="1.2 0.5"/><path d="M15 21.2H24" stroke="#c8c8c8" stroke-width="1" stroke-dasharray="1.2 0.5"/><path d="M15 23.8H21" stroke="#c8c8c8" stroke-width="1" stroke-dasharray="1.2 0.5"/><path d="M15 26.4H22" stroke="#c8c8c8" stroke-width="1" stroke-dasharray="1.2 0.5"/><path d="M15 29.0H20" stroke="#c8c8c8" stroke-width="1" stroke-dasharray="1.2 0.5"/><path d="M15 31.6H23" stroke="#c8c8c8" stroke-width="1" stroke-dasharray="1.2 0.5"/><path d="M15 34.2H21" stroke="#c8c8c8" stroke-width="1" stroke-dasharray="1.2 0.5"/><path d="M15 36.8H23" stroke="#c8c8c8" stroke-width="1" stroke-dasharray="1.2 0.5"/><path d="M15 39.400000000000006H21" stroke="#c8c8c8" stroke-width="1" stroke-dasharray="1.2 0.5"/><path d="M5 42.0H32" stroke="#d2d2d2" stroke-width="0.8" stroke-dasharray="1.2 0.5"/><path d="M5 43.8H32" stroke="#d2d2d2" stroke-width="0.8" stroke-dasharray="1.2 0.5"/><path d="M5 45.6H32" stroke="#d2d2d2" stroke-width="0.8" stroke-dasharray="1.2 0.5"/><path d="M5 47.4H32" stroke="#d2d2d2" stroke-width="0.8" stroke-dasharray="1.2 0.5"/><path d="M27 50H31" stroke="#999999" stroke-width="0.9" stroke-dasharray="1.2 0.5"/></svg>
<div class="t" style="left:299px;top:664px;font-size:13px;color:#111;word-spacing:2px">封底 - 封面</div>
<div class="t" style="left:387px;top:664px;font-size:13px;color:#111;">封2</div>
<div class="t" style="left:432px;top:664px;font-size:13px;color:#111;">1</div>
<div class="t" style="left:474px;top:664px;font-size:13px;color:#111;">2</div>
<div class="t" style="left:514px;top:664px;font-size:13px;color:#111;">3</div>
<div class="t" style="left:556px;top:664px;font-size:13px;color:#111;">4</div>
<div class="t" style="left:596px;top:664px;font-size:13px;color:#111;">5</div>
<div class="t" style="left:638px;top:664px;font-size:13px;color:#111;">6</div>
<div class="t" style="left:678px;top:664px;font-size:13px;color:#111;">7</div>
<div class="t" style="left:720px;top:664px;font-size:13px;color:#111;">8</div>
<div class="t" style="left:760px;top:664px;font-size:13px;color:#111;">9</div>
<div class="t" style="left:798px;top:664px;font-size:13px;color:#111;">10</div>
<div class="t" style="left:839px;top:664px;font-size:13px;color:#111;">11</div>
<div class="t" style="left:880px;top:664px;font-size:13px;color:#111;">12</div>
<div class="t" style="left:921px;top:664px;font-size:13px;color:#111;">13</div>
<div class="t" style="left:962px;top:664px;font-size:13px;color:#111;">14</div>
<div class="t" style="left:1003px;top:664px;font-size:13px;color:#111;">15</div>
<div class="t" style="left:1044px;top:664px;font-size:13px;color:#111;">16</div>
<div class="t" style="left:1085px;top:664px;font-size:13px;color:#111;">17</div>
<div class="t" style="left:1126px;top:664px;font-size:13px;color:#111;">18</div>
<div class="t" style="left:1167px;top:664px;font-size:13px;color:#111;">19</div>
<div class="t" style="left:1208px;top:664px;font-size:13px;color:#111;">20</div>
<div class="t" style="left:1249px;top:664px;font-size:13px;color:#111;">21</div>
<div class="t" style="left:1290px;top:664px;font-size:13px;color:#111;">22</div>
<div class="t" style="left:1331px;top:664px;font-size:13px;color:#111;">23</div>
<div class="a" style="left:1284px;top:245px;width:60px;height:384px;background:#fff;border-radius:4px;box-shadow:0 0 4px rgba(0,0,0,0.25)"></div>
<div class="a" style="left:1284px;top:245px;width:60px;height:25px;background:#87a7d3;border-radius:4px 4px 0 0"></div>
<svg class="a" style="left:1328px;top:253px;" width="9" height="9" viewBox="0 0 9 9"><path d="M0.5 0.5L8.5 8.5M8.5 0.5L0.5 8.5" stroke="#fff" stroke-width="1.4"/></svg>
<svg class="a" style="left:1303px;top:278px;" width="22" height="25" viewBox="0 0 22 25"><path d="M1 1H15L21 7V24H1Z" fill="#fff" stroke="#333" stroke-width="2" stroke-linejoin="round"/><path d="M15 1V7H21" fill="none" stroke="#333" stroke-width="1.5"/><path d="M6 15H16M11 10V20" stroke="#333" stroke-width="2"/></svg>
<div class="t" style="left:1302px;top:309px;font-size:12px;color:#777;">加页</div>
<svg class="a" style="left:1303px;top:337px;" width="22" height="25" viewBox="0 0 22 25"><path d="M1 1H15L21 7V24H1Z" fill="#fff" stroke="#333" stroke-width="2" stroke-linejoin="round"/><path d="M15 1V7H21" fill="none" stroke="#333" stroke-width="1.5"/><path d="M6 15H16" stroke="#333" stroke-width="2"/></svg>
<div class="t" style="left:1302px;top:368px;font-size:12px;color:#777;">删页</div>
<svg class="a" style="left:1302px;top:396px;" width="24" height="25" viewBox="0 0 24 25"><circle cx="11" cy="11" r="9.5" fill="none" stroke="#333" stroke-width="2"/><path d="M17.5 18L22 23" stroke="#333" stroke-width="2"/><path d="M6 11H16M11 6V16" stroke="#333" stroke-width="2"/></svg>
<div class="t" style="left:1302px;top:427px;font-size:12px;color:#777;">放大</div>
<svg class="a" style="left:1302px;top:455px;" width="24" height="25" viewBox="0 0 24 25"><circle cx="11" cy="11" r="9.5" fill="none" stroke="#333" stroke-width="2"/><path d="M17.5 18L22 23" stroke="#333" stroke-width="2"/><path d="M6 11H16" stroke="#333" stroke-width="2"/></svg>
<div class="t" style="left:1302px;top:486px;font-size:12px;color:#777;">缩小</div>
<svg class="a" style="left:1302px;top:514px;" width="24" height="23" viewBox="0 0 24 23"><path d="M12 3Q7 0 1 1.5V20Q7 18.5 12 21.5Q17 18.5 23 20V1.5Q17 0 12 3Z" fill="#fff" stroke="#333" stroke-width="2" stroke-linejoin="round"/><path d="M12 3V21" stroke="#333" stroke-width="2"/></svg>
<div class="t" style="left:1302px;top:544px;font-size:12px;color:#777;">预览</div>
<svg class="a" style="left:1302px;top:575px;" width="24" height="21" viewBox="0 0 24 21"><path d="M10 1C5 1 1 4.2 1 8C1 10.2 2.2 12 4 13.2L3.5 16L6.5 14.5C7.6 14.8 8.8 15 10 15C10.5 15 11 15 11.5 14.9" fill="#fff" stroke="#333" stroke-width="1.7"/><path d="M15.5 7C11.5 7 8.5 9.6 8.5 12.6C8.5 15.6 11.5 18.2 15.5 18.2C16.4 18.2 17.3 18.1 18 17.8L21 19.5L20.3 16.8C21.9 15.8 22.8 14.3 22.8 12.6C22.8 9.6 19.5 7 15.5 7Z" fill="#fff" stroke="#333" stroke-width="1.7"/><circle cx="7" cy="6" r="1.1" fill="#333"/><circle cx="12" cy="6" r="1.1" fill="#333"/><circle cx="13" cy="11.5" r="1" fill="#333"/><circle cx="18" cy="11.5" r="1" fill="#333"/></svg>
<div class="t" style="left:1302px;top:604px;font-size:12px;color:#777;">分享</div>
</body></html>
